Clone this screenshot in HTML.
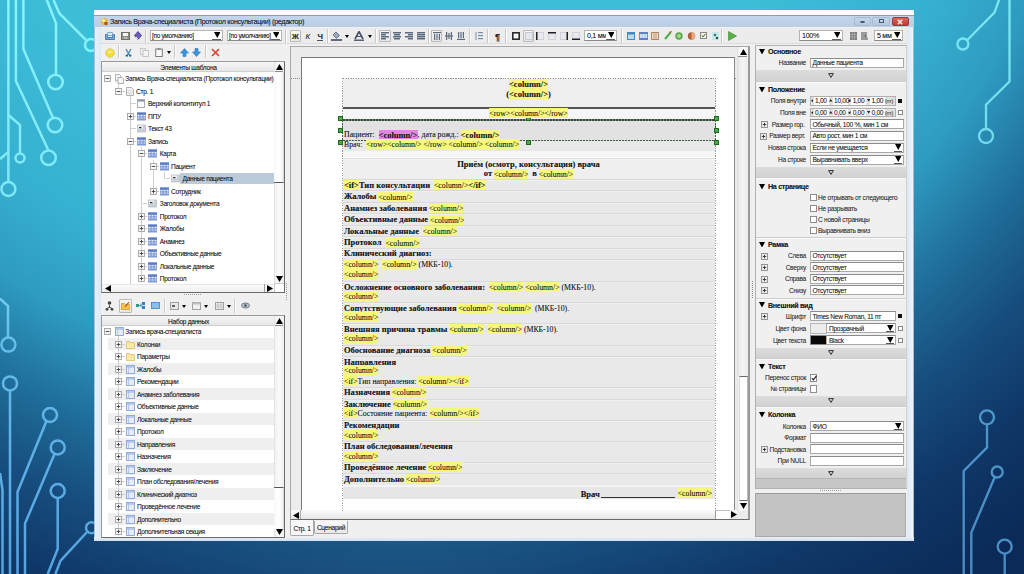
<!DOCTYPE html>
<html><head><meta charset="utf-8">
<style>
*{margin:0;padding:0;box-sizing:border-box}
html,body{width:1024px;height:574px;overflow:hidden}
body{position:relative;font-family:"Liberation Sans",sans-serif;background:radial-gradient(ellipse 200px 60px at 400px 574px,rgba(45,100,140,0.25),rgba(45,100,140,0) 100%),radial-gradient(circle 1050px at 400px -300px,#3dbdd8 44.3%,#36b0d0 58.4%,#2e9bc0 66.4%,#1f6d9a 74.8%,#174f80 81.6%,#0f3868 89.5%,#0b2a58 99%)}
.a{position:absolute}
.t{position:absolute;white-space:nowrap;line-height:1;text-shadow:0 0 0.5px rgba(0,0,0,0.35)}
.hl{background:#f7f77e;padding:0.6px 0}
b{font-size:8.5px}
.pk{background:#e385e4;padding:0.6px 0}
</style></head><body>
<svg class="a" style="left:0;top:0" width="1024" height="574" viewBox="0 0 1024 574">
 <defs>
  <linearGradient id="lc" x1="0" y1="0" x2="0" y2="574" gradientUnits="userSpaceOnUse">
   <stop offset="0" stop-color="#86f4fb"/><stop offset="0.4" stop-color="#7ee6f6"/><stop offset="0.6" stop-color="#67bdea"/><stop offset="1" stop-color="#55a2e0"/>
  </linearGradient>
  <linearGradient id="rc" x1="0" y1="0" x2="0" y2="574" gradientUnits="userSpaceOnUse">
   <stop offset="0" stop-color="#7ce8f4"/><stop offset="0.3" stop-color="#6fd6ec"/><stop offset="0.7" stop-color="#5098cc"/><stop offset="1" stop-color="#4a8cc4"/>
  </linearGradient>
 </defs>
 <g fill="none" stroke="url(#lc)" stroke-width="2.5">
  <path d="M8.4 0V182"/>
  <path d="M15.9 0V81L48.5 150.5"/>
  <path d="M23.4 0V49L53 118"/>
  <path d="M46.8 0L56 23.4V74.5"/>
  <circle cx="55.5" cy="82" r="7.3"/>
  <path d="M53.5 0L59.4 13.4L86 40"/>
  <circle cx="91" cy="45" r="6"/>
  <path d="M8.4 115L20 125V153.5"/>
  <circle cx="20" cy="158" r="4.5"/>
  <path d="M8.4 152L0 159"/>
  <circle cx="48.5" cy="157.8" r="7.3"/>
  <circle cx="55" cy="125" r="7.3"/>
  <circle cx="8.4" cy="189" r="7"/>
  <path d="M0 298.6L8 306V337.6"/>
  <circle cx="8.4" cy="344.6" r="7"/>
  <circle cx="10" cy="383.4" r="7"/>
  <path d="M10 390.4V574"/>
  <circle cx="50" cy="415" r="7"/>
  <path d="M46.5 421L17.5 492V574"/>
  <circle cx="57.7" cy="447.5" r="7"/>
  <path d="M54.5 454L25 523.6V574"/>
  <circle cx="57.7" cy="491" r="7"/>
  <path d="M57.7 498V549L47.7 574"/>
  <path d="M0 473L2.5 490V574"/>
  <circle cx="91.5" cy="527.7" r="5.5"/>
  <path d="M87.5 531.5L60.6 560.6L55.4 574"/>
  </g><g fill="none" stroke="url(#rc)" stroke-width="2.3">
  <path d="M999 0L994.4 12.6L966.8 40.5"/>
  <circle cx="962.9" cy="44" r="5.5"/>
  <path d="M1009.5 0V81.5L986 104.7V129"/>
  <circle cx="986" cy="136" r="7"/>
  <circle cx="987" cy="417.3" r="7"/>
  <path d="M987 424.3V447.5L963.7 471V574"/>
  <circle cx="997.2" cy="472" r="5.5"/>
  <path d="M994.8 477L971.3 532.6V574"/>
  <circle cx="1004.7" cy="546.6" r="7"/>
  <path d="M1004.7 553.6V574"/>
 </g>
</svg>
<div class="a" style="left:94px;top:10px;width:820px;height:531px;background:#e4eef8"></div><div class="a" style="left:94px;top:10px;width:820px;height:5px;background:#fafbfc"></div><div class="a" style="left:94px;top:15px;width:820px;height:1px;background:#8d9cab"></div><div class="a" style="left:94px;top:16px;width:820px;height:11px;background:linear-gradient(#c4d5ea,#b9cde6)"></div><div class="a" style="left:94px;top:27px;width:1px;height:513px;background:#a9bccf"></div><div class="a" style="left:913px;top:27px;width:1px;height:513px;background:#a9bccf"></div><div class="a" style="left:95px;top:27px;width:6px;height:511px;background:linear-gradient(90deg,#e9f1fa,#dce8f4)"></div><div class="a" style="left:907px;top:27px;width:6px;height:511px;background:linear-gradient(90deg,#dce8f4,#eef4fb)"></div><div class="a" style="left:94px;top:537px;width:820px;height:4px;background:linear-gradient(#f0f0f0,#dfe9f4 40%,#cfe0f0)"></div><div class="a" style="left:101px;top:27px;width:806px;height:510px;background:#f0f0f0"></div><svg class="a" style="left:100px;top:17px" width="9" height="9" viewBox="0 0 9 9"><circle cx="4.5" cy="4.5" r="3.6" fill="#e8b64a"/><circle cx="3.5" cy="3.5" r="1.6" fill="#fff3b0"/><circle cx="6" cy="6.5" r="1.8" fill="#b0502a"/></svg><div class="t" style="left:110px;top:18.82px;font-size:7.15px;color:#15202e;font-weight:400;font-family:'Liberation Sans',sans-serif;letter-spacing:-0.305px;">Запись Врача-специалиста (Протокол консультации) (редактор)</div><div class="a" style="left:854px;top:16.5px;width:17px;height:9.5px;background:linear-gradient(#c4d5ea,#b4c8e2);border:1px solid #a8bad0;border-radius:2px"></div><div class="a" style="left:859.5px;top:20.5px;width:5px;height:2.5px;border:1px solid #4a5870;border-radius:1px"></div><div class="a" style="left:872px;top:16.5px;width:17.5px;height:9.5px;background:linear-gradient(#c4d5ea,#b4c8e2);border:1px solid #a8bad0;border-radius:2px"></div><div class="a" style="left:878.5px;top:18.8px;width:5px;height:4px;border:1.3px solid #4a5870"></div><div class="a" style="left:891.5px;top:16.5px;width:17px;height:9.5px;background:linear-gradient(#d86a60,#c03a30);border:1px solid #9a3a34;border-radius:2px"></div><svg class="a" style="left:897px;top:18.5px" width="6" height="6" viewBox="0 0 6 6"><path d="M0.8 0.8L5.2 5.2M5.2 0.8L0.8 5.2" stroke="#f4e8e4" stroke-width="1.6"/></svg><div class="a" style="left:101px;top:28px;width:806px;height:16px;background:#ececec"></div><div class="a" style="left:101px;top:43px;width:806px;height:1px;background:#dcdcdc"></div><svg class="a" style="left:105px;top:31px" width="10" height="9" viewBox="0 0 10 9"><path d="M0.5 3.5h2v3h5v-3h2v5h-9z" fill="#7aa7d6" stroke="#4d7fb6" stroke-width="1"/><path d="M2.5 1.5h5v3h-5z" fill="#d7ebf8" stroke="#6a9ccc" stroke-width="0.8"/></svg><svg class="a" style="left:121px;top:32px" width="9" height="8" viewBox="0 0 9 8"><rect x="0.5" y="0.5" width="8" height="7" fill="#8a8a82" stroke="#6e6e66"/><rect x="2" y="1" width="5" height="3" fill="#f4f4f4"/><rect x="2.5" y="5" width="4" height="2" fill="#b9b9b0"/></svg><svg class="a" style="left:134px;top:31px" width="8" height="9" viewBox="0 0 8 9"><path d="M4 0.5L7.5 4.5L4 8.5L0.5 4.5z" fill="#6a5cb8" stroke="#3e3390" stroke-width="0.8"/><path d="M2 6l2 2.5" stroke="#fff" stroke-width="1"/></svg><div class="a" style="left:145px;top:29px;width:1px;height:14px;background:#c9c9c9"></div><div class="a" style="left:146px;top:29px;width:1px;height:14px;background:#fbfbfb"></div><div class="a" style="left:150px;top:30px;width:73px;height:11px;background:#fff;border:1px solid #b5b5b5;border-bottom-color:#8a8a8a"></div><div class="t" style="left:152px;top:33.11px;font-size:6.38px;color:#202020;font-weight:400;font-family:'Liberation Sans',sans-serif;letter-spacing:-0.273px;">[по умолчанию]</div><div class="a" style="left:212px;top:31px;width:10px;height:9px;background:#fff"></div><svg class="a" style="left:213.75px;top:32.20px" width="6.5" height="6" viewBox="0 0 6.5 6"><polygon points="0,0 6.5,0 3.25,6" fill="#000"/></svg><div class="a" style="left:212px;top:39px;width:9px;height:1px;background:#606060"></div><div class="a" style="left:227px;top:30px;width:55px;height:11px;background:#fff;border:1px solid #b5b5b5;border-bottom-color:#8a8a8a"></div><div class="t" style="left:229px;top:33.11px;font-size:6.38px;color:#202020;font-weight:400;font-family:'Liberation Sans',sans-serif;letter-spacing:-0.273px;">[по умолчанию]</div><div class="a" style="left:271px;top:31px;width:10px;height:9px;background:#fff"></div><svg class="a" style="left:272.75px;top:32.20px" width="6.5" height="6" viewBox="0 0 6.5 6"><polygon points="0,0 6.5,0 3.25,6" fill="#000"/></svg><div class="a" style="left:271px;top:39px;width:9px;height:1px;background:#606060"></div><div class="a" style="left:285px;top:29px;width:1px;height:14px;background:#c9c9c9"></div><div class="a" style="left:286px;top:29px;width:1px;height:14px;background:#fbfbfb"></div><div class="a" style="left:290px;top:30px;width:11px;height:12px;background:linear-gradient(#f7f7f7,#e6e6e6);border:1px solid #b9b9b9;border-radius:1px"></div><div class="t" style="left:95.5px;width:400px;text-align:center;top:33.19px;font-size:7.5px;color:#303030;font-weight:700;font-family:'Liberation Sans',sans-serif;">Ж</div><div class="t" style="left:107.69999999999999px;width:400px;text-align:center;top:33.11px;font-size:7.7px;color:#303030;font-weight:400;font-family:'Liberation Sans',sans-serif;letter-spacing:-0.329px;font-style:italic">К</div><div class="t" style="left:120px;width:400px;text-align:center;top:32.71px;font-size:7.7px;color:#303030;font-weight:700;font-family:'Liberation Sans',sans-serif;letter-spacing:-0.329px;">Ч</div><div class="a" style="left:317px;top:40px;width:6px;height:1px;background:#505050"></div><div class="a" style="left:327px;top:29px;width:1px;height:14px;background:#c9c9c9"></div><div class="a" style="left:328px;top:29px;width:1px;height:14px;background:#fbfbfb"></div><svg class="a" style="left:331px;top:31px" width="11" height="10" viewBox="0 0 11 10"><path d="M2 4L5 1L8.5 4.5L5.5 7.5z" fill="#9aa8c0" stroke="#56627a" stroke-width="0.8"/><rect x="0" y="8" width="11" height="2" fill="#606a7a"/></svg><svg class="a" style="left:344.50px;top:34.50px" width="4" height="3" viewBox="0 0 4 3"><polygon points="0,0 4,0 2.0,3" fill="#000"/></svg><svg class="a" style="left:354px;top:31px" width="10" height="10" viewBox="0 0 10 10"><path d="M1 8L5 0.5L9 8" fill="none" stroke="#4a5068" stroke-width="1.6"/><path d="M3 5.5h4" stroke="#4a5068" stroke-width="1"/><rect x="0" y="8.5" width="10" height="1.5" fill="#5a6278"/></svg><svg class="a" style="left:367.50px;top:34.50px" width="4" height="3" viewBox="0 0 4 3"><polygon points="0,0 4,0 2.0,3" fill="#000"/></svg><div class="a" style="left:375px;top:29px;width:1px;height:14px;background:#c9c9c9"></div><div class="a" style="left:376px;top:29px;width:1px;height:14px;background:#fbfbfb"></div><div class="a" style="left:379px;top:30px;width:12px;height:12px;background:linear-gradient(#f7f7f7,#e6e6e6);border:1px solid #b9b9b9;border-radius:1px"></div><svg class="a" style="left:381px;top:32px" width="8" height="8" viewBox="0 0 8 8"><rect x="0" y="0" width="8" height="1.5" fill="#5c6a80"/><rect x="0" y="2" width="5" height="1.5" fill="#5c6a80"/><rect x="0" y="4" width="8" height="1.5" fill="#5c6a80"/><rect x="0" y="6" width="5" height="1.5" fill="#5c6a80"/></svg><svg class="a" style="left:393px;top:32px" width="8" height="8" viewBox="0 0 8 8"><rect x="0" y="0" width="8" height="1.5" fill="#5c6a80"/><rect x="1" y="2" width="6" height="1.5" fill="#5c6a80"/><rect x="0" y="4" width="8" height="1.5" fill="#5c6a80"/><rect x="1" y="6" width="6" height="1.5" fill="#5c6a80"/></svg><svg class="a" style="left:405px;top:32px" width="8" height="8" viewBox="0 0 8 8"><rect x="0" y="0" width="8" height="1.5" fill="#5c6a80"/><rect x="3" y="2" width="5" height="1.5" fill="#5c6a80"/><rect x="0" y="4" width="8" height="1.5" fill="#5c6a80"/><rect x="3" y="6" width="5" height="1.5" fill="#5c6a80"/></svg><svg class="a" style="left:417px;top:32px" width="8" height="8" viewBox="0 0 8 8"><rect x="0" y="0" width="8" height="1.5" fill="#5c6a80"/><rect x="0" y="2" width="8" height="1.5" fill="#5c6a80"/><rect x="0" y="4" width="8" height="1.5" fill="#5c6a80"/><rect x="0" y="6" width="8" height="1.5" fill="#5c6a80"/></svg><div class="a" style="left:428px;top:29px;width:1px;height:14px;background:#c9c9c9"></div><div class="a" style="left:429px;top:29px;width:1px;height:14px;background:#fbfbfb"></div><div class="a" style="left:431px;top:30px;width:11px;height:12px;background:linear-gradient(#f7f7f7,#e6e6e6);border:1px solid #b9b9b9;border-radius:1px"></div><svg class="a" style="left:433px;top:32px" width="8" height="8" viewBox="0 0 8 8"><rect x="0" y="0" width="8" height="1.2" fill="#5c6a80"/><rect x="1" y="2" width="1.2" height="6" fill="#5c6a80"/><rect x="3.4" y="2" width="1.2" height="6" fill="#5c6a80"/><rect x="5.8" y="2" width="1.2" height="6" fill="#5c6a80"/></svg><svg class="a" style="left:445px;top:32px" width="8" height="8" viewBox="0 0 8 8"><rect x="0" y="3.4" width="8" height="1.2" fill="#5c6a80"/><rect x="1" y="0" width="1.2" height="8" fill="#5c6a80"/><rect x="3.4" y="1" width="1.2" height="6" fill="#5c6a80"/><rect x="5.8" y="0" width="1.2" height="8" fill="#5c6a80"/></svg><svg class="a" style="left:457px;top:32px" width="8" height="8" viewBox="0 0 8 8"><rect x="0" y="6.8" width="8" height="1.2" fill="#5c6a80"/><rect x="1" y="0" width="1.2" height="6" fill="#5c6a80"/><rect x="3.4" y="0" width="1.2" height="6" fill="#5c6a80"/><rect x="5.8" y="0" width="1.2" height="6" fill="#5c6a80"/></svg><div class="a" style="left:469px;top:29px;width:1px;height:14px;background:#c9c9c9"></div><div class="a" style="left:470px;top:29px;width:1px;height:14px;background:#fbfbfb"></div><svg class="a" style="left:475px;top:32px" width="8" height="8" viewBox="0 0 8 8"><rect x="3" y="0" width="5" height="1.2" fill="#7890a8"/><rect x="3" y="3" width="5" height="1.2" fill="#7890a8"/><rect x="3" y="6" width="5" height="1.2" fill="#7890a8"/><path d="M1 0v8" stroke="#7890a8" stroke-width="1"/></svg><div class="a" style="left:487px;top:29px;width:1px;height:14px;background:#c9c9c9"></div><div class="a" style="left:488px;top:29px;width:1px;height:14px;background:#fbfbfb"></div><div class="t" style="left:297.5px;width:400px;text-align:center;top:32.92px;font-size:9px;color:#202020;font-weight:700;font-family:'Liberation Sans',sans-serif;">¶</div><div class="a" style="left:505px;top:29px;width:1px;height:14px;background:#c9c9c9"></div><div class="a" style="left:506px;top:29px;width:1px;height:14px;background:#fbfbfb"></div><svg class="a" style="left:512px;top:32px" width="8" height="8" viewBox="0 0 8 8"><rect x="0.8" y="0.8" width="6.4" height="6.4" fill="#f4f4f8" stroke="#202020" stroke-width="1.5"/></svg><div class="a" style="left:523px;top:30px;width:11px;height:12px;background:linear-gradient(#f7f7f7,#e6e6e6);border:1px solid #b9b9b9;border-radius:1px"></div><svg class="a" style="left:525px;top:32px" width="8" height="8" viewBox="0 0 8 8"><rect x="0.5" y="0.5" width="7" height="7" fill="#e4e6f0" stroke="#c8c8d0" stroke-width="1"/></svg><svg class="a" style="left:536px;top:32px" width="8" height="8" viewBox="0 0 8 8"><rect x="0.5" y="0.5" width="7" height="7" fill="#e8e8ee" stroke="#d0d0d8"/><rect x="0" y="0" width="1.5" height="8" fill="#202020"/></svg><svg class="a" style="left:548px;top:32px" width="8" height="8" viewBox="0 0 8 8"><rect x="0.5" y="0.5" width="7" height="7" fill="#e8e8ee" stroke="#d0d0d8"/><rect x="0" y="0" width="8" height="1.5" fill="#202020"/></svg><svg class="a" style="left:560px;top:32px" width="8" height="8" viewBox="0 0 8 8"><rect x="0.5" y="0.5" width="7" height="7" fill="#e8e8ee" stroke="#d0d0d8"/><rect x="6.5" y="0" width="1.5" height="8" fill="#202020"/></svg><svg class="a" style="left:572px;top:32px" width="8" height="8" viewBox="0 0 8 8"><rect x="0.5" y="0.5" width="7" height="7" fill="#e8e8ee" stroke="#d0d0d8"/><rect x="0" y="6.5" width="8" height="1.5" fill="#202020"/></svg><div class="a" style="left:584px;top:30px;width:33px;height:11px;background:#fff;border:1px solid #b5b5b5;border-bottom-color:#8a8a8a"></div><div class="t" style="left:587px;top:32.82px;font-size:7.15px;color:#202020;font-weight:400;font-family:'Liberation Sans',sans-serif;letter-spacing:-0.305px;">0,1 мм</div><div class="a" style="left:606px;top:31px;width:10px;height:9px;background:#fff"></div><svg class="a" style="left:607.75px;top:32.20px" width="6.5" height="6" viewBox="0 0 6.5 6"><polygon points="0,0 6.5,0 3.25,6" fill="#000"/></svg><div class="a" style="left:606px;top:39px;width:9px;height:1px;background:#606060"></div><div class="a" style="left:621px;top:29px;width:1px;height:14px;background:#c9c9c9"></div><div class="a" style="left:622px;top:29px;width:1px;height:14px;background:#fbfbfb"></div><svg class="a" style="left:627px;top:32px" width="8" height="8" viewBox="0 0 8 8"><rect x="0.5" y="0.5" width="7" height="7" fill="#bcd8f4" stroke="#4a86c8"/><rect x="0.5" y="0.5" width="7" height="2" fill="#4a86c8"/></svg><svg class="a" style="left:639px;top:32px" width="9" height="8" viewBox="0 0 9 8"><rect x="0" y="0" width="9" height="8" fill="#5a82c8"/><rect x="0.8" y="2" width="7.4" height="4" fill="#d8e4f6"/><path d="M3 2v4M6 2v4" stroke="#8aa6d8" stroke-width="0.6"/></svg><svg class="a" style="left:651px;top:32px" width="8" height="8" viewBox="0 0 8 8"><rect x="0.5" y="0.5" width="7" height="7" fill="#f2dcc8" stroke="#b08a68"/><path d="M3 0.5v7M5 0.5v7" stroke="#b08a68" stroke-width="0.8"/></svg><svg class="a" style="left:664px;top:31px" width="8" height="9" viewBox="0 0 8 9"><path d="M1 8L6.5 1.5" stroke="#4caf40" stroke-width="2"/><path d="M6 1.5l1.5-1" stroke="#d04030" stroke-width="1.5"/></svg><svg class="a" style="left:675px;top:32px" width="8" height="8" viewBox="0 0 8 8"><circle cx="4" cy="4" r="3.7" fill="#5aa84a"/><circle cx="4" cy="4" r="2" fill="#a8d890"/></svg><svg class="a" style="left:687px;top:32px" width="9" height="8" viewBox="0 0 9 8"><circle cx="4.5" cy="4" r="3.7" fill="#b0603a"/><path d="M4.5 0.3a3.7 3.7 0 0 1 0 7.4z" fill="#e8a880"/></svg><svg class="a" style="left:700px;top:32px" width="7" height="7" viewBox="0 0 7 7"><rect x="0.5" y="0.5" width="6" height="6" fill="#f0f0e8" stroke="#8a8a80"/><path d="M1.8 3.5l1.2 1.4l2.3-2.8" fill="none" stroke="#2a6a20" stroke-width="1"/></svg><svg class="a" style="left:712px;top:32px" width="7" height="8" viewBox="0 0 7 8"><rect x="0" y="0" width="7" height="8" fill="#c8e8e8"/><circle cx="3" cy="3" r="1.3" fill="#3a7a7a"/><circle cx="5" cy="6" r="1.2" fill="#1a5050"/></svg><div class="a" style="left:721px;top:29px;width:1px;height:14px;background:#c9c9c9"></div><div class="a" style="left:722px;top:29px;width:1px;height:14px;background:#fbfbfb"></div><svg class="a" style="left:728px;top:31px" width="9" height="10" viewBox="0 0 9 10"><path d="M0.5 0.5L8.5 5L0.5 9.5z" fill="#58b048" stroke="#3a8a30" stroke-width="0.6"/></svg><div class="a" style="left:799px;top:30px;width:44px;height:11px;background:#fff;border:1px solid #b5b5b5;border-bottom-color:#8a8a8a"></div><div class="t" style="left:802px;top:32.82px;font-size:7.15px;color:#202020;font-weight:400;font-family:'Liberation Sans',sans-serif;letter-spacing:-0.305px;">100%</div><div class="a" style="left:832px;top:31px;width:10px;height:9px;background:#fff"></div><svg class="a" style="left:833.75px;top:32.20px" width="6.5" height="6" viewBox="0 0 6.5 6"><polygon points="0,0 6.5,0 3.25,6" fill="#000"/></svg><div class="a" style="left:832px;top:39px;width:9px;height:1px;background:#606060"></div><svg class="a" style="left:850px;top:32px" width="7" height="8" viewBox="0 0 7 8"><rect x="0" y="0" width="7" height="8" fill="#7a7a7a"/><path d="M0 2.5h7M0 5h7M2.3 0v8M4.6 0v8" stroke="#c8c8c8" stroke-width="0.5"/></svg><svg class="a" style="left:861px;top:32px" width="8" height="9" viewBox="0 0 8 9"><rect x="0" y="0" width="6" height="8" fill="#9a9a9a"/><path d="M4 3l3 4l-1.5 0.5z" fill="#fff" stroke="#505050" stroke-width="0.6"/></svg><div class="a" style="left:874px;top:30px;width:29px;height:11px;background:#fff;border:1px solid #b5b5b5;border-bottom-color:#8a8a8a"></div><div class="t" style="left:877px;top:32.82px;font-size:7.15px;color:#202020;font-weight:400;font-family:'Liberation Sans',sans-serif;letter-spacing:-0.305px;">5 мм</div><div class="a" style="left:892px;top:31px;width:10px;height:9px;background:#fff"></div><svg class="a" style="left:893.75px;top:32.20px" width="6.5" height="6" viewBox="0 0 6.5 6"><polygon points="0,0 6.5,0 3.25,6" fill="#000"/></svg><div class="a" style="left:892px;top:39px;width:9px;height:1px;background:#606060"></div><svg class="a" style="left:105px;top:48px" width="10" height="10" viewBox="0 0 10 10"><circle cx="5" cy="5" r="4.3" fill="#f2dc3c" stroke="#e0c030" stroke-width="0.6"/><ellipse cx="5" cy="4" rx="2.6" ry="1.6" fill="#f8ec80"/></svg><div class="a" style="left:118px;top:45px;width:1px;height:13px;background:#c9c9c9"></div><div class="a" style="left:119px;top:45px;width:1px;height:13px;background:#fbfbfb"></div><svg class="a" style="left:125px;top:48px" width="7" height="9" viewBox="0 0 7 9"><path d="M1 1L5 8M6 1L2 8" stroke="#4a8ab8" stroke-width="1.4"/><circle cx="1.8" cy="7.6" r="1.2" fill="#2a6a98"/><circle cx="5.2" cy="7.6" r="1.2" fill="#2a6a98"/></svg><svg class="a" style="left:140px;top:48px" width="9" height="9" viewBox="0 0 9 9"><rect x="0.5" y="0.5" width="5" height="6" fill="#f0f0f0" stroke="#c0c0c0" stroke-width="0.8"/><rect x="3" y="2.5" width="5.5" height="6" fill="#f4f4f4" stroke="#b8b8b8" stroke-width="0.8"/></svg><svg class="a" style="left:155px;top:48px" width="8" height="9" viewBox="0 0 8 9"><rect x="0.7" y="1" width="6.6" height="7.5" fill="#f8f8f8" stroke="#707070" stroke-width="0.9"/><rect x="2.5" y="0" width="3" height="2" fill="#909090"/></svg><svg class="a" style="left:166.50px;top:50.80px" width="4" height="3" viewBox="0 0 4 3"><polygon points="0,0 4,0 2.0,3" fill="#000"/></svg><div class="a" style="left:174px;top:45px;width:1px;height:13px;background:#c9c9c9"></div><div class="a" style="left:175px;top:45px;width:1px;height:13px;background:#fbfbfb"></div><svg class="a" style="left:180px;top:48px" width="9" height="9" viewBox="0 0 9 9"><path d="M4.5 0.5L8.5 5H6v3.5H3V5H0.5z" fill="#3a94dc" stroke="#2a78c0" stroke-width="0.6"/></svg><svg class="a" style="left:192px;top:48px" width="9" height="9" viewBox="0 0 9 9"><path d="M4.5 8.5L8.5 4H6V0.5H3V4H0.5z" fill="#3a94dc" stroke="#2a78c0" stroke-width="0.6"/></svg><div class="a" style="left:205px;top:45px;width:1px;height:13px;background:#c9c9c9"></div><div class="a" style="left:206px;top:45px;width:1px;height:13px;background:#fbfbfb"></div><svg class="a" style="left:211px;top:48px" width="9" height="9" viewBox="0 0 9 9"><path d="M1 1L8 8M8 1L1 8" stroke="#d83a2a" stroke-width="1.5"/></svg><div class="a" style="left:101px;top:61px;width:184px;height:232px;background:#fff;border:1px solid #9a9a9a;border-right:1.5px solid #6a6a6a;border-bottom:1.5px solid #6a6a6a"></div><div class="a" style="left:102px;top:62px;width:172px;height:10px;background:linear-gradient(#f6f6f6,#e6e6e6);border-bottom:1px solid #cfcfcf"></div><div class="t" style="left:-11.5px;width:400px;text-align:center;top:64.73px;font-size:6.6px;color:#202020;font-weight:400;font-family:'Liberation Sans',sans-serif;letter-spacing:-0.282px;">Элементы шаблона</div><div class="a" style="left:274px;top:62px;width:10px;height:222px;background:linear-gradient(90deg,#f0f0f0,#fafafa 40%,#f0f0f0);border-left:1px solid #e4e4e4"></div><div class="a" style="left:274px;top:72px;width:10px;height:111px;background:linear-gradient(90deg,#f8f8f8,#fff 50%,#f2f2f2);border-bottom:1px solid #5a5a5a;border-right:1px solid #d8d8d8"></div><svg class="a" style="left:275.50px;top:64.30px" width="7" height="6" viewBox="0 0 7 6"><polygon points="0,6 7,6 3.5,0" fill="#000"/></svg><div class="a" style="left:275px;top:71px;width:8px;height:1px;background:#8a8a8a"></div><svg class="a" style="left:275.50px;top:275.60px" width="7" height="6" viewBox="0 0 7 6"><polygon points="0,0 7,0 3.5,6" fill="#000"/></svg><div class="a" style="left:102px;top:284px;width:172px;height:8px;background:linear-gradient(#fafafa,#eeeeee);border-top:1px solid #e8e8e8"></div><svg class="a" style="left:104.50px;top:284.50px" width="6" height="7" viewBox="0 0 6 7"><polygon points="6,0 6,7 0,3.5" fill="#000"/></svg><svg class="a" style="left:266.50px;top:284.50px" width="6" height="7" viewBox="0 0 6 7"><polygon points="0,0 0,7 6,3.5" fill="#000"/></svg><div class="a" style="left:264px;top:284px;width:1px;height:8px;background:#9a9a9a"></div><div class="a" style="left:274px;top:283px;width:10px;height:9px;background:#fff;border-left:1px solid #d0d0d0;border-top:1px solid #d0d0d0"></div><div class="a" style="left:180px;top:173px;width:94px;height:11px;background:#bccbd9"></div><div class="a" style="left:118px;top:84px;width:1px;height:5px;background:#cfcfcf"></div><div class="a" style="left:130px;top:96px;width:1px;height:188px;background:#cfcfcf"></div><div class="a" style="left:141px;top:147px;width:1px;height:132px;background:#cfcfcf"></div><div class="a" style="left:153px;top:160px;width:1px;height:31px;background:#cfcfcf"></div><div class="a" style="left:164px;top:172px;width:1px;height:7px;background:#cfcfcf"></div><svg class="a" style="left:103.5px;top:75.2px" width="7" height="7" viewBox="0 0 7 7"><rect x="0.5" y="0.5" width="6" height="6" fill="#f6f6f6" stroke="#a4a4a4" stroke-width="0.9"/><path d="M1.7 3.5h3.6" stroke="#383838" stroke-width="0.85"/></svg><svg class="a" style="left:115px;top:74.2px" width="9" height="10" viewBox="0 0 9 10"><path d="M0.5 0.5h4l1.5 1.5v5h-5.5z" fill="#f6f6f6" stroke="#a8a8a8" stroke-width="0.9"/><path d="M3 3.5h4l1.5 1.5v4.5h-5.5z" fill="#f6f6f6" stroke="#a8a8a8" stroke-width="0.9"/></svg><div class="t" style="left:125.3px;top:76.23px;font-size:6.6px;color:#1e1e1e;font-weight:400;font-family:'Liberation Sans',sans-serif;letter-spacing:-0.282px;">Запись Врача-специалиста (Протокол консультации)</div><div class="a" style="left:119.7px;top:91px;width:5.299999999999997px;height:1px;background:#cfcfcf"></div><svg class="a" style="left:115.2px;top:87.7px" width="7" height="7" viewBox="0 0 7 7"><rect x="0.5" y="0.5" width="6" height="6" fill="#f6f6f6" stroke="#a4a4a4" stroke-width="0.9"/><path d="M1.7 3.5h3.6" stroke="#383838" stroke-width="0.85"/></svg><svg class="a" style="left:126px;top:86.7px" width="8" height="9" viewBox="0 0 8 9"><path d="M0.5 0.5h5l2 2v6h-7z" fill="#f4f4f4" stroke="#a8a8a8" stroke-width="0.9"/><path d="M1.5 3.5h5M1.5 5.5h5M1.5 7h5" stroke="#d0d0d0" stroke-width="0.7"/></svg><div class="t" style="left:136px;top:88.73px;font-size:6.6px;color:#1e1e1e;font-weight:400;font-family:'Liberation Sans',sans-serif;letter-spacing:-0.282px;">Стр. 1</div><div class="a" style="left:131px;top:103px;width:5px;height:1px;background:#cfcfcf"></div><svg class="a" style="left:137px;top:99.2px" width="8" height="9" viewBox="0 0 8 9"><rect x="0.5" y="0.5" width="7" height="8" fill="#fbfbfb" stroke="#a4a4a4" stroke-width="0.9"/><rect x="1" y="1" width="6" height="1.6" fill="#8898b8"/></svg><div class="t" style="left:148px;top:101.23px;font-size:6.6px;color:#1e1e1e;font-weight:400;font-family:'Liberation Sans',sans-serif;letter-spacing:-0.282px;">Верхний колонтитул 1</div><div class="a" style="left:131px;top:116px;width:5px;height:1px;background:#cfcfcf"></div><svg class="a" style="left:126.5px;top:112.7px" width="7" height="7" viewBox="0 0 7 7"><rect x="0.5" y="0.5" width="6" height="6" fill="#f6f6f6" stroke="#a4a4a4" stroke-width="0.9"/><path d="M1.7 3.5h3.6" stroke="#383838" stroke-width="0.85"/><path d="M3.5 1.7v3.6" stroke="#383838" stroke-width="0.85"/></svg><svg class="a" style="left:137px;top:111.7px" width="9" height="9" viewBox="0 0 9 9"><rect x="0" y="0.5" width="9" height="8" fill="#7e9ad6"/><rect x="0" y="0.5" width="9" height="2" fill="#5d7cc4"/><path d="M0.6 3.6h1.8M3.6 3.6h1.8M6.6 3.6h1.8M0.6 6h1.8M3.6 6h1.8M6.6 6h1.8" stroke="#eef2fa" stroke-width="1.1"/></svg><div class="t" style="left:148px;top:113.73px;font-size:6.6px;color:#1e1e1e;font-weight:400;font-family:'Liberation Sans',sans-serif;letter-spacing:-0.282px;">ППУ</div><div class="a" style="left:131px;top:128px;width:5px;height:1px;background:#cfcfcf"></div><svg class="a" style="left:137px;top:124.19999999999999px" width="9" height="9" viewBox="0 0 9 9"><rect x="0.5" y="1" width="8" height="7" fill="#c8d0d8" stroke="#b8c0c8" stroke-width="0.8"/><rect x="1" y="1.5" width="5" height="3" fill="#eef0f2"/><rect x="2" y="3" width="2.5" height="1.2" fill="#303030"/></svg><div class="t" style="left:148px;top:126.22px;font-size:6.6px;color:#1e1e1e;font-weight:400;font-family:'Liberation Sans',sans-serif;letter-spacing:-0.282px;">Текст 43</div><div class="a" style="left:131px;top:141px;width:5px;height:1px;background:#cfcfcf"></div><svg class="a" style="left:126.5px;top:137.7px" width="7" height="7" viewBox="0 0 7 7"><rect x="0.5" y="0.5" width="6" height="6" fill="#f6f6f6" stroke="#a4a4a4" stroke-width="0.9"/><path d="M1.7 3.5h3.6" stroke="#383838" stroke-width="0.85"/></svg><svg class="a" style="left:137px;top:136.7px" width="9" height="9" viewBox="0 0 9 9"><rect x="0" y="0.5" width="9" height="8" fill="#7e9ad6"/><rect x="0" y="0.5" width="9" height="2" fill="#5d7cc4"/><path d="M0.6 3.6h1.8M3.6 3.6h1.8M6.6 3.6h1.8M0.6 6h1.8M3.6 6h1.8M6.6 6h1.8" stroke="#eef2fa" stroke-width="1.1"/></svg><div class="t" style="left:148px;top:138.72px;font-size:6.6px;color:#1e1e1e;font-weight:400;font-family:'Liberation Sans',sans-serif;letter-spacing:-0.282px;">Запись</div><div class="a" style="left:142.5px;top:153px;width:4.5px;height:1px;background:#cfcfcf"></div><svg class="a" style="left:138.0px;top:150.2px" width="7" height="7" viewBox="0 0 7 7"><rect x="0.5" y="0.5" width="6" height="6" fill="#f6f6f6" stroke="#a4a4a4" stroke-width="0.9"/><path d="M1.7 3.5h3.6" stroke="#383838" stroke-width="0.85"/></svg><svg class="a" style="left:148px;top:149.2px" width="9" height="9" viewBox="0 0 9 9"><rect x="0" y="0.5" width="9" height="8" fill="#7e9ad6"/><rect x="0" y="0.5" width="9" height="2" fill="#5d7cc4"/><path d="M0.6 3.6h1.8M3.6 3.6h1.8M6.6 3.6h1.8M0.6 6h1.8M3.6 6h1.8M6.6 6h1.8" stroke="#eef2fa" stroke-width="1.1"/></svg><div class="t" style="left:159.7px;top:151.22px;font-size:6.6px;color:#1e1e1e;font-weight:400;font-family:'Liberation Sans',sans-serif;letter-spacing:-0.282px;">Карта</div><div class="a" style="left:154px;top:166px;width:4.5px;height:1px;background:#cfcfcf"></div><svg class="a" style="left:149.5px;top:162.7px" width="7" height="7" viewBox="0 0 7 7"><rect x="0.5" y="0.5" width="6" height="6" fill="#f6f6f6" stroke="#a4a4a4" stroke-width="0.9"/><path d="M1.7 3.5h3.6" stroke="#383838" stroke-width="0.85"/></svg><svg class="a" style="left:159.5px;top:161.7px" width="9" height="9" viewBox="0 0 9 9"><rect x="0" y="0.5" width="9" height="8" fill="#7e9ad6"/><rect x="0" y="0.5" width="9" height="2" fill="#5d7cc4"/><path d="M0.6 3.6h1.8M3.6 3.6h1.8M6.6 3.6h1.8M0.6 6h1.8M3.6 6h1.8M6.6 6h1.8" stroke="#eef2fa" stroke-width="1.1"/></svg><div class="t" style="left:171px;top:163.72px;font-size:6.6px;color:#1e1e1e;font-weight:400;font-family:'Liberation Sans',sans-serif;letter-spacing:-0.282px;">Пациент</div><div class="a" style="left:165.5px;top:178px;width:4.5px;height:1px;background:#cfcfcf"></div><svg class="a" style="left:171px;top:174.2px" width="9" height="9" viewBox="0 0 9 9"><rect x="0.5" y="1" width="8" height="7" fill="#c8d0d8" stroke="#b8c0c8" stroke-width="0.8"/><rect x="1" y="1.5" width="5" height="3" fill="#eef0f2"/><rect x="2" y="3" width="2.5" height="1.2" fill="#303030"/></svg><div class="t" style="left:182.5px;top:176.22px;font-size:6.6px;color:#1e1e1e;font-weight:400;font-family:'Liberation Sans',sans-serif;letter-spacing:-0.282px;">Данные пациента</div><div class="a" style="left:154px;top:191px;width:4.5px;height:1px;background:#cfcfcf"></div><svg class="a" style="left:149.5px;top:187.7px" width="7" height="7" viewBox="0 0 7 7"><rect x="0.5" y="0.5" width="6" height="6" fill="#f6f6f6" stroke="#a4a4a4" stroke-width="0.9"/><path d="M1.7 3.5h3.6" stroke="#383838" stroke-width="0.85"/><path d="M3.5 1.7v3.6" stroke="#383838" stroke-width="0.85"/></svg><svg class="a" style="left:159.5px;top:186.7px" width="9" height="9" viewBox="0 0 9 9"><rect x="0" y="0.5" width="9" height="8" fill="#7e9ad6"/><rect x="0" y="0.5" width="9" height="2" fill="#5d7cc4"/><path d="M0.6 3.6h1.8M3.6 3.6h1.8M6.6 3.6h1.8M0.6 6h1.8M3.6 6h1.8M6.6 6h1.8" stroke="#eef2fa" stroke-width="1.1"/></svg><div class="t" style="left:171px;top:188.72px;font-size:6.6px;color:#1e1e1e;font-weight:400;font-family:'Liberation Sans',sans-serif;letter-spacing:-0.282px;">Сотрудник</div><div class="a" style="left:142.5px;top:203px;width:4.5px;height:1px;background:#cfcfcf"></div><svg class="a" style="left:148px;top:199.2px" width="9" height="9" viewBox="0 0 9 9"><rect x="0.5" y="1" width="8" height="7" fill="#c8d0d8" stroke="#b8c0c8" stroke-width="0.8"/><rect x="1" y="1.5" width="5" height="3" fill="#eef0f2"/><rect x="2" y="3" width="2.5" height="1.2" fill="#303030"/></svg><div class="t" style="left:159.7px;top:201.22px;font-size:6.6px;color:#1e1e1e;font-weight:400;font-family:'Liberation Sans',sans-serif;letter-spacing:-0.282px;">Заголовок документа</div><div class="a" style="left:142.5px;top:216px;width:4.5px;height:1px;background:#cfcfcf"></div><svg class="a" style="left:138.0px;top:212.7px" width="7" height="7" viewBox="0 0 7 7"><rect x="0.5" y="0.5" width="6" height="6" fill="#f6f6f6" stroke="#a4a4a4" stroke-width="0.9"/><path d="M1.7 3.5h3.6" stroke="#383838" stroke-width="0.85"/><path d="M3.5 1.7v3.6" stroke="#383838" stroke-width="0.85"/></svg><svg class="a" style="left:148px;top:211.7px" width="9" height="9" viewBox="0 0 9 9"><rect x="0" y="0.5" width="9" height="8" fill="#7e9ad6"/><rect x="0" y="0.5" width="9" height="2" fill="#5d7cc4"/><path d="M0.6 3.6h1.8M3.6 3.6h1.8M6.6 3.6h1.8M0.6 6h1.8M3.6 6h1.8M6.6 6h1.8" stroke="#eef2fa" stroke-width="1.1"/></svg><div class="t" style="left:159.7px;top:213.72px;font-size:6.6px;color:#1e1e1e;font-weight:400;font-family:'Liberation Sans',sans-serif;letter-spacing:-0.282px;">Протокол</div><div class="a" style="left:142.5px;top:228px;width:4.5px;height:1px;background:#cfcfcf"></div><svg class="a" style="left:138.0px;top:225.2px" width="7" height="7" viewBox="0 0 7 7"><rect x="0.5" y="0.5" width="6" height="6" fill="#f6f6f6" stroke="#a4a4a4" stroke-width="0.9"/><path d="M1.7 3.5h3.6" stroke="#383838" stroke-width="0.85"/><path d="M3.5 1.7v3.6" stroke="#383838" stroke-width="0.85"/></svg><svg class="a" style="left:148px;top:224.2px" width="9" height="9" viewBox="0 0 9 9"><rect x="0" y="0.5" width="9" height="8" fill="#7e9ad6"/><rect x="0" y="0.5" width="9" height="2" fill="#5d7cc4"/><path d="M0.6 3.6h1.8M3.6 3.6h1.8M6.6 3.6h1.8M0.6 6h1.8M3.6 6h1.8M6.6 6h1.8" stroke="#eef2fa" stroke-width="1.1"/></svg><div class="t" style="left:159.7px;top:226.22px;font-size:6.6px;color:#1e1e1e;font-weight:400;font-family:'Liberation Sans',sans-serif;letter-spacing:-0.282px;">Жалобы</div><div class="a" style="left:142.5px;top:241px;width:4.5px;height:1px;background:#cfcfcf"></div><svg class="a" style="left:138.0px;top:237.7px" width="7" height="7" viewBox="0 0 7 7"><rect x="0.5" y="0.5" width="6" height="6" fill="#f6f6f6" stroke="#a4a4a4" stroke-width="0.9"/><path d="M1.7 3.5h3.6" stroke="#383838" stroke-width="0.85"/><path d="M3.5 1.7v3.6" stroke="#383838" stroke-width="0.85"/></svg><svg class="a" style="left:148px;top:236.7px" width="9" height="9" viewBox="0 0 9 9"><rect x="0" y="0.5" width="9" height="8" fill="#7e9ad6"/><rect x="0" y="0.5" width="9" height="2" fill="#5d7cc4"/><path d="M0.6 3.6h1.8M3.6 3.6h1.8M6.6 3.6h1.8M0.6 6h1.8M3.6 6h1.8M6.6 6h1.8" stroke="#eef2fa" stroke-width="1.1"/></svg><div class="t" style="left:159.7px;top:238.72px;font-size:6.6px;color:#1e1e1e;font-weight:400;font-family:'Liberation Sans',sans-serif;letter-spacing:-0.282px;">Анамнез</div><div class="a" style="left:142.5px;top:253px;width:4.5px;height:1px;background:#cfcfcf"></div><svg class="a" style="left:138.0px;top:250.2px" width="7" height="7" viewBox="0 0 7 7"><rect x="0.5" y="0.5" width="6" height="6" fill="#f6f6f6" stroke="#a4a4a4" stroke-width="0.9"/><path d="M1.7 3.5h3.6" stroke="#383838" stroke-width="0.85"/><path d="M3.5 1.7v3.6" stroke="#383838" stroke-width="0.85"/></svg><svg class="a" style="left:148px;top:249.2px" width="9" height="9" viewBox="0 0 9 9"><rect x="0" y="0.5" width="9" height="8" fill="#7e9ad6"/><rect x="0" y="0.5" width="9" height="2" fill="#5d7cc4"/><path d="M0.6 3.6h1.8M3.6 3.6h1.8M6.6 3.6h1.8M0.6 6h1.8M3.6 6h1.8M6.6 6h1.8" stroke="#eef2fa" stroke-width="1.1"/></svg><div class="t" style="left:159.7px;top:251.22px;font-size:6.6px;color:#1e1e1e;font-weight:400;font-family:'Liberation Sans',sans-serif;letter-spacing:-0.282px;">Объективные данные</div><div class="a" style="left:142.5px;top:266px;width:4.5px;height:1px;background:#cfcfcf"></div><svg class="a" style="left:138.0px;top:262.7px" width="7" height="7" viewBox="0 0 7 7"><rect x="0.5" y="0.5" width="6" height="6" fill="#f6f6f6" stroke="#a4a4a4" stroke-width="0.9"/><path d="M1.7 3.5h3.6" stroke="#383838" stroke-width="0.85"/><path d="M3.5 1.7v3.6" stroke="#383838" stroke-width="0.85"/></svg><svg class="a" style="left:148px;top:261.7px" width="9" height="9" viewBox="0 0 9 9"><rect x="0" y="0.5" width="9" height="8" fill="#7e9ad6"/><rect x="0" y="0.5" width="9" height="2" fill="#5d7cc4"/><path d="M0.6 3.6h1.8M3.6 3.6h1.8M6.6 3.6h1.8M0.6 6h1.8M3.6 6h1.8M6.6 6h1.8" stroke="#eef2fa" stroke-width="1.1"/></svg><div class="t" style="left:159.7px;top:263.72px;font-size:6.6px;color:#1e1e1e;font-weight:400;font-family:'Liberation Sans',sans-serif;letter-spacing:-0.282px;">Локальные данные</div><div class="a" style="left:142.5px;top:278px;width:4.5px;height:1px;background:#cfcfcf"></div><svg class="a" style="left:138.0px;top:275.2px" width="7" height="7" viewBox="0 0 7 7"><rect x="0.5" y="0.5" width="6" height="6" fill="#f6f6f6" stroke="#a4a4a4" stroke-width="0.9"/><path d="M1.7 3.5h3.6" stroke="#383838" stroke-width="0.85"/><path d="M3.5 1.7v3.6" stroke="#383838" stroke-width="0.85"/></svg><svg class="a" style="left:148px;top:274.2px" width="9" height="9" viewBox="0 0 9 9"><rect x="0" y="0.5" width="9" height="8" fill="#7e9ad6"/><rect x="0" y="0.5" width="9" height="2" fill="#5d7cc4"/><path d="M0.6 3.6h1.8M3.6 3.6h1.8M6.6 3.6h1.8M0.6 6h1.8M3.6 6h1.8M6.6 6h1.8" stroke="#eef2fa" stroke-width="1.1"/></svg><div class="t" style="left:159.7px;top:276.22px;font-size:6.6px;color:#1e1e1e;font-weight:400;font-family:'Liberation Sans',sans-serif;letter-spacing:-0.282px;">Протокол</div><div class="a" style="left:184px;top:294px;width:17px;height:1px;background:repeating-linear-gradient(90deg,#9a9a9a 0 1px,transparent 1px 2px)"></div><div class="a" style="left:286px;top:283px;width:1px;height:17px;background:repeating-linear-gradient(#9a9a9a 0 1px,transparent 1px 2px)"></div><svg class="a" style="left:105px;top:301px" width="9" height="10" viewBox="0 0 9 10"><circle cx="4.5" cy="2" r="1.8" fill="#404040"/><path d="M4.5 4v3M2 7.5l2.5-1.5l2.5 1.5" stroke="#404040" stroke-width="0.9" fill="none"/><circle cx="2" cy="8.3" r="1.4" fill="#404040"/><circle cx="7" cy="8.3" r="1.4" fill="#404040"/></svg><div class="a" style="left:119px;top:299px;width:13px;height:14px;background:linear-gradient(#f7f7f7,#e6e6e6);border:1px solid #b9b9b9;border-radius:1px"></div><svg class="a" style="left:121px;top:301px" width="9" height="9" viewBox="0 0 9 9"><path d="M0.5 2.5h3l1 1h4v5h-8z" fill="#f2c64a" stroke="#c89820" stroke-width="0.7"/><path d="M4 6L8 1" stroke="#c04020" stroke-width="1.2"/></svg><svg class="a" style="left:136px;top:302px" width="9" height="7" viewBox="0 0 9 7"><rect x="0" y="2" width="3" height="3" fill="#2a9a8a"/><rect x="6" y="0" width="3" height="3" fill="#3a7ac8"/><rect x="6" y="4" width="3" height="3" fill="#3a7ac8"/><path d="M3 3.5h3M5 1.5v4" stroke="#2a8a9a" stroke-width="0.8"/></svg><svg class="a" style="left:151px;top:302px" width="9" height="7" viewBox="0 0 9 7"><rect x="0.5" y="0.5" width="8" height="6" fill="#8ac0e8" stroke="#3a80c0" stroke-width="0.8"/></svg><div class="a" style="left:164px;top:299px;width:1px;height:14px;background:#c9c9c9"></div><div class="a" style="left:165px;top:299px;width:1px;height:14px;background:#fbfbfb"></div><svg class="a" style="left:170px;top:302px" width="9" height="8" viewBox="0 0 9 8"><rect x="0.5" y="0.5" width="8" height="7" fill="#e8e8e8" stroke="#a0a0a0"/><rect x="2" y="3" width="3" height="2" fill="#606060"/></svg><svg class="a" style="left:182.30px;top:304.50px" width="4" height="3" viewBox="0 0 4 3"><polygon points="0,0 4,0 2.0,3" fill="#000"/></svg><svg class="a" style="left:192px;top:302px" width="9" height="8" viewBox="0 0 9 8"><rect x="0.5" y="0.5" width="8" height="7" fill="#f0f0f0" stroke="#a0a0a0"/><rect x="0.5" y="0.5" width="8" height="2" fill="#c0c0c0"/></svg><svg class="a" style="left:204.40px;top:304.50px" width="4" height="3" viewBox="0 0 4 3"><polygon points="0,0 4,0 2.0,3" fill="#000"/></svg><svg class="a" style="left:215px;top:302px" width="9" height="8" viewBox="0 0 9 8"><rect x="0.5" y="0.5" width="8" height="7" fill="#f0f0f0" stroke="#a0a0a0"/><path d="M0.5 3h8M0.5 5h8M3 0.5v7M6 0.5v7" stroke="#b0b0b0" stroke-width="0.6"/></svg><svg class="a" style="left:226.80px;top:304.50px" width="4" height="3" viewBox="0 0 4 3"><polygon points="0,0 4,0 2.0,3" fill="#000"/></svg><div class="a" style="left:234px;top:299px;width:1px;height:14px;background:#c9c9c9"></div><div class="a" style="left:235px;top:299px;width:1px;height:14px;background:#fbfbfb"></div><svg class="a" style="left:241px;top:302px" width="9" height="7" viewBox="0 0 9 7"><ellipse cx="4.5" cy="3.5" rx="4" ry="2.5" fill="#b8c4d0" stroke="#5a6470" stroke-width="0.8"/><circle cx="4.5" cy="3.5" r="1.2" fill="#404850"/></svg><div class="a" style="left:101px;top:315px;width:184px;height:223px;background:#fff;border:1px solid #9a9a9a;border-right:1.5px solid #6a6a6a;border-bottom:1.5px solid #6a6a6a"></div><div class="a" style="left:102px;top:316px;width:172px;height:10px;background:linear-gradient(#f6f6f6,#e6e6e6);border-bottom:1px solid #cfcfcf"></div><div class="t" style="left:-11.5px;width:400px;text-align:center;top:318.82px;font-size:6.6px;color:#202020;font-weight:400;font-family:'Liberation Sans',sans-serif;letter-spacing:-0.282px;">Набор данных</div><div class="a" style="left:274px;top:316px;width:10px;height:221px;background:linear-gradient(90deg,#f0f0f0,#fafafa 40%,#f0f0f0);border-left:1px solid #e4e4e4"></div><div class="a" style="left:274px;top:487px;width:10px;height:43px;background:linear-gradient(90deg,#f8f8f8,#fff 50%,#f2f2f2);border-top:1px solid #5a5a5a;border-right:1px solid #d8d8d8"></div><svg class="a" style="left:275.50px;top:318.30px" width="7" height="6" viewBox="0 0 7 6"><polygon points="0,6 7,6 3.5,0" fill="#000"/></svg><div class="a" style="left:275px;top:325px;width:8px;height:1px;background:#8a8a8a"></div><svg class="a" style="left:275.50px;top:528.50px" width="7" height="6" viewBox="0 0 7 6"><polygon points="0,0 7,0 3.5,6" fill="#000"/></svg><div class="a" style="left:108px;top:338px;width:166px;height:12px;background:#efefef"></div><div class="a" style="left:108px;top:363px;width:166px;height:12px;background:#efefef"></div><div class="a" style="left:108px;top:388px;width:166px;height:12px;background:#efefef"></div><div class="a" style="left:108px;top:413px;width:166px;height:12px;background:#efefef"></div><div class="a" style="left:108px;top:438px;width:166px;height:12px;background:#efefef"></div><div class="a" style="left:108px;top:463px;width:166px;height:12px;background:#efefef"></div><div class="a" style="left:108px;top:488px;width:166px;height:12px;background:#efefef"></div><div class="a" style="left:108px;top:513px;width:166px;height:12px;background:#efefef"></div><svg class="a" style="left:103.5px;top:327.9px" width="7" height="7" viewBox="0 0 7 7"><rect x="0.5" y="0.5" width="6" height="6" fill="#f6f6f6" stroke="#a4a4a4" stroke-width="0.9"/><path d="M1.7 3.5h3.6" stroke="#383838" stroke-width="0.85"/></svg><svg class="a" style="left:115px;top:326.9px" width="9" height="9" viewBox="0 0 9 9"><rect x="0.5" y="0.5" width="8" height="8" fill="#e4ecf8" stroke="#8aa4d4" stroke-width="0.9"/><rect x="1" y="1" width="7" height="1.8" fill="#b4c8ec"/><path d="M2.6 1v7" stroke="#a8bce4" stroke-width="0.8"/></svg><div class="t" style="left:125.3px;top:328.92px;font-size:6.6px;color:#1e1e1e;font-weight:400;font-family:'Liberation Sans',sans-serif;letter-spacing:-0.282px;">Запись врача-специалиста</div><div class="a" style="left:118px;top:336px;width:1px;height:200px;background:#cfcfcf"></div><div class="a" style="left:121px;top:344px;width:4px;height:1px;background:#cfcfcf"></div><svg class="a" style="left:115.0px;top:340.5px" width="7" height="7" viewBox="0 0 7 7"><rect x="0.5" y="0.5" width="6" height="6" fill="#f6f6f6" stroke="#a4a4a4" stroke-width="0.9"/><path d="M1.7 3.5h3.6" stroke="#383838" stroke-width="0.85"/><path d="M3.5 1.7v3.6" stroke="#383838" stroke-width="0.85"/></svg><svg class="a" style="left:125.5px;top:339.5px" width="9" height="9" viewBox="0 0 9 9"><path d="M0.5 1.5h3l1 1h4v6h-8z" fill="#f8e08c" stroke="#dcc070" stroke-width="0.8"/><rect x="1" y="3.5" width="7" height="4.5" fill="#fbe9a8"/></svg><div class="t" style="left:137px;top:341.52px;font-size:6.6px;color:#1e1e1e;font-weight:400;font-family:'Liberation Sans',sans-serif;letter-spacing:-0.282px;">Колонки</div><div class="a" style="left:121px;top:356px;width:4px;height:1px;background:#cfcfcf"></div><svg class="a" style="left:115.0px;top:353.0px" width="7" height="7" viewBox="0 0 7 7"><rect x="0.5" y="0.5" width="6" height="6" fill="#f6f6f6" stroke="#a4a4a4" stroke-width="0.9"/><path d="M1.7 3.5h3.6" stroke="#383838" stroke-width="0.85"/><path d="M3.5 1.7v3.6" stroke="#383838" stroke-width="0.85"/></svg><svg class="a" style="left:125.5px;top:352.0px" width="9" height="9" viewBox="0 0 9 9"><path d="M0.5 1.5h3l1 1h4v6h-8z" fill="#f8e08c" stroke="#dcc070" stroke-width="0.8"/><rect x="1" y="3.5" width="7" height="4.5" fill="#fbe9a8"/></svg><div class="t" style="left:137px;top:354.02px;font-size:6.6px;color:#1e1e1e;font-weight:400;font-family:'Liberation Sans',sans-serif;letter-spacing:-0.282px;">Параметры</div><div class="a" style="left:121px;top:369px;width:4px;height:1px;background:#cfcfcf"></div><svg class="a" style="left:115.0px;top:365.5px" width="7" height="7" viewBox="0 0 7 7"><rect x="0.5" y="0.5" width="6" height="6" fill="#f6f6f6" stroke="#a4a4a4" stroke-width="0.9"/><path d="M1.7 3.5h3.6" stroke="#383838" stroke-width="0.85"/><path d="M3.5 1.7v3.6" stroke="#383838" stroke-width="0.85"/></svg><svg class="a" style="left:125.5px;top:364.5px" width="9" height="9" viewBox="0 0 9 9"><rect x="0.5" y="0.5" width="8" height="8" fill="#e4ecf8" stroke="#8aa4d4" stroke-width="0.9"/><rect x="1" y="1" width="7" height="1.8" fill="#b4c8ec"/><path d="M2.6 1v7" stroke="#a8bce4" stroke-width="0.8"/></svg><div class="t" style="left:137px;top:366.52px;font-size:6.6px;color:#1e1e1e;font-weight:400;font-family:'Liberation Sans',sans-serif;letter-spacing:-0.282px;">Жалобы</div><div class="a" style="left:121px;top:381px;width:4px;height:1px;background:#cfcfcf"></div><svg class="a" style="left:115.0px;top:378.0px" width="7" height="7" viewBox="0 0 7 7"><rect x="0.5" y="0.5" width="6" height="6" fill="#f6f6f6" stroke="#a4a4a4" stroke-width="0.9"/><path d="M1.7 3.5h3.6" stroke="#383838" stroke-width="0.85"/><path d="M3.5 1.7v3.6" stroke="#383838" stroke-width="0.85"/></svg><svg class="a" style="left:125.5px;top:377.0px" width="9" height="9" viewBox="0 0 9 9"><rect x="0.5" y="0.5" width="8" height="8" fill="#e4ecf8" stroke="#8aa4d4" stroke-width="0.9"/><rect x="1" y="1" width="7" height="1.8" fill="#b4c8ec"/><path d="M2.6 1v7" stroke="#a8bce4" stroke-width="0.8"/></svg><div class="t" style="left:137px;top:379.02px;font-size:6.6px;color:#1e1e1e;font-weight:400;font-family:'Liberation Sans',sans-serif;letter-spacing:-0.282px;">Рекомендации</div><div class="a" style="left:121px;top:394px;width:4px;height:1px;background:#cfcfcf"></div><svg class="a" style="left:115.0px;top:390.5px" width="7" height="7" viewBox="0 0 7 7"><rect x="0.5" y="0.5" width="6" height="6" fill="#f6f6f6" stroke="#a4a4a4" stroke-width="0.9"/><path d="M1.7 3.5h3.6" stroke="#383838" stroke-width="0.85"/><path d="M3.5 1.7v3.6" stroke="#383838" stroke-width="0.85"/></svg><svg class="a" style="left:125.5px;top:389.5px" width="9" height="9" viewBox="0 0 9 9"><rect x="0.5" y="0.5" width="8" height="8" fill="#e4ecf8" stroke="#8aa4d4" stroke-width="0.9"/><rect x="1" y="1" width="7" height="1.8" fill="#b4c8ec"/><path d="M2.6 1v7" stroke="#a8bce4" stroke-width="0.8"/></svg><div class="t" style="left:137px;top:391.52px;font-size:6.6px;color:#1e1e1e;font-weight:400;font-family:'Liberation Sans',sans-serif;letter-spacing:-0.282px;">Анамнез заболевания</div><div class="a" style="left:121px;top:406px;width:4px;height:1px;background:#cfcfcf"></div><svg class="a" style="left:115.0px;top:403.0px" width="7" height="7" viewBox="0 0 7 7"><rect x="0.5" y="0.5" width="6" height="6" fill="#f6f6f6" stroke="#a4a4a4" stroke-width="0.9"/><path d="M1.7 3.5h3.6" stroke="#383838" stroke-width="0.85"/><path d="M3.5 1.7v3.6" stroke="#383838" stroke-width="0.85"/></svg><svg class="a" style="left:125.5px;top:402.0px" width="9" height="9" viewBox="0 0 9 9"><rect x="0.5" y="0.5" width="8" height="8" fill="#e4ecf8" stroke="#8aa4d4" stroke-width="0.9"/><rect x="1" y="1" width="7" height="1.8" fill="#b4c8ec"/><path d="M2.6 1v7" stroke="#a8bce4" stroke-width="0.8"/></svg><div class="t" style="left:137px;top:404.02px;font-size:6.6px;color:#1e1e1e;font-weight:400;font-family:'Liberation Sans',sans-serif;letter-spacing:-0.282px;">Объективные данные</div><div class="a" style="left:121px;top:419px;width:4px;height:1px;background:#cfcfcf"></div><svg class="a" style="left:115.0px;top:415.5px" width="7" height="7" viewBox="0 0 7 7"><rect x="0.5" y="0.5" width="6" height="6" fill="#f6f6f6" stroke="#a4a4a4" stroke-width="0.9"/><path d="M1.7 3.5h3.6" stroke="#383838" stroke-width="0.85"/><path d="M3.5 1.7v3.6" stroke="#383838" stroke-width="0.85"/></svg><svg class="a" style="left:125.5px;top:414.5px" width="9" height="9" viewBox="0 0 9 9"><rect x="0.5" y="0.5" width="8" height="8" fill="#e4ecf8" stroke="#8aa4d4" stroke-width="0.9"/><rect x="1" y="1" width="7" height="1.8" fill="#b4c8ec"/><path d="M2.6 1v7" stroke="#a8bce4" stroke-width="0.8"/></svg><div class="t" style="left:137px;top:416.52px;font-size:6.6px;color:#1e1e1e;font-weight:400;font-family:'Liberation Sans',sans-serif;letter-spacing:-0.282px;">Локальные данные</div><div class="a" style="left:121px;top:431px;width:4px;height:1px;background:#cfcfcf"></div><svg class="a" style="left:115.0px;top:428.0px" width="7" height="7" viewBox="0 0 7 7"><rect x="0.5" y="0.5" width="6" height="6" fill="#f6f6f6" stroke="#a4a4a4" stroke-width="0.9"/><path d="M1.7 3.5h3.6" stroke="#383838" stroke-width="0.85"/><path d="M3.5 1.7v3.6" stroke="#383838" stroke-width="0.85"/></svg><svg class="a" style="left:125.5px;top:427.0px" width="9" height="9" viewBox="0 0 9 9"><rect x="0.5" y="0.5" width="8" height="8" fill="#e4ecf8" stroke="#8aa4d4" stroke-width="0.9"/><rect x="1" y="1" width="7" height="1.8" fill="#b4c8ec"/><path d="M2.6 1v7" stroke="#a8bce4" stroke-width="0.8"/></svg><div class="t" style="left:137px;top:429.02px;font-size:6.6px;color:#1e1e1e;font-weight:400;font-family:'Liberation Sans',sans-serif;letter-spacing:-0.282px;">Протокол</div><div class="a" style="left:121px;top:444px;width:4px;height:1px;background:#cfcfcf"></div><svg class="a" style="left:115.0px;top:440.5px" width="7" height="7" viewBox="0 0 7 7"><rect x="0.5" y="0.5" width="6" height="6" fill="#f6f6f6" stroke="#a4a4a4" stroke-width="0.9"/><path d="M1.7 3.5h3.6" stroke="#383838" stroke-width="0.85"/><path d="M3.5 1.7v3.6" stroke="#383838" stroke-width="0.85"/></svg><svg class="a" style="left:125.5px;top:439.5px" width="9" height="9" viewBox="0 0 9 9"><rect x="0.5" y="0.5" width="8" height="8" fill="#e4ecf8" stroke="#8aa4d4" stroke-width="0.9"/><rect x="1" y="1" width="7" height="1.8" fill="#b4c8ec"/><path d="M2.6 1v7" stroke="#a8bce4" stroke-width="0.8"/></svg><div class="t" style="left:137px;top:441.52px;font-size:6.6px;color:#1e1e1e;font-weight:400;font-family:'Liberation Sans',sans-serif;letter-spacing:-0.282px;">Направления</div><div class="a" style="left:121px;top:456px;width:4px;height:1px;background:#cfcfcf"></div><svg class="a" style="left:115.0px;top:453.0px" width="7" height="7" viewBox="0 0 7 7"><rect x="0.5" y="0.5" width="6" height="6" fill="#f6f6f6" stroke="#a4a4a4" stroke-width="0.9"/><path d="M1.7 3.5h3.6" stroke="#383838" stroke-width="0.85"/><path d="M3.5 1.7v3.6" stroke="#383838" stroke-width="0.85"/></svg><svg class="a" style="left:125.5px;top:452.0px" width="9" height="9" viewBox="0 0 9 9"><rect x="0.5" y="0.5" width="8" height="8" fill="#e4ecf8" stroke="#8aa4d4" stroke-width="0.9"/><rect x="1" y="1" width="7" height="1.8" fill="#b4c8ec"/><path d="M2.6 1v7" stroke="#a8bce4" stroke-width="0.8"/></svg><div class="t" style="left:137px;top:454.02px;font-size:6.6px;color:#1e1e1e;font-weight:400;font-family:'Liberation Sans',sans-serif;letter-spacing:-0.282px;">Назначения</div><div class="a" style="left:121px;top:469px;width:4px;height:1px;background:#cfcfcf"></div><svg class="a" style="left:115.0px;top:465.5px" width="7" height="7" viewBox="0 0 7 7"><rect x="0.5" y="0.5" width="6" height="6" fill="#f6f6f6" stroke="#a4a4a4" stroke-width="0.9"/><path d="M1.7 3.5h3.6" stroke="#383838" stroke-width="0.85"/><path d="M3.5 1.7v3.6" stroke="#383838" stroke-width="0.85"/></svg><svg class="a" style="left:125.5px;top:464.5px" width="9" height="9" viewBox="0 0 9 9"><rect x="0.5" y="0.5" width="8" height="8" fill="#e4ecf8" stroke="#8aa4d4" stroke-width="0.9"/><rect x="1" y="1" width="7" height="1.8" fill="#b4c8ec"/><path d="M2.6 1v7" stroke="#a8bce4" stroke-width="0.8"/></svg><div class="t" style="left:137px;top:466.52px;font-size:6.6px;color:#1e1e1e;font-weight:400;font-family:'Liberation Sans',sans-serif;letter-spacing:-0.282px;">Заключение</div><div class="a" style="left:121px;top:481px;width:4px;height:1px;background:#cfcfcf"></div><svg class="a" style="left:115.0px;top:478.0px" width="7" height="7" viewBox="0 0 7 7"><rect x="0.5" y="0.5" width="6" height="6" fill="#f6f6f6" stroke="#a4a4a4" stroke-width="0.9"/><path d="M1.7 3.5h3.6" stroke="#383838" stroke-width="0.85"/><path d="M3.5 1.7v3.6" stroke="#383838" stroke-width="0.85"/></svg><svg class="a" style="left:125.5px;top:477.0px" width="9" height="9" viewBox="0 0 9 9"><rect x="0.5" y="0.5" width="8" height="8" fill="#e4ecf8" stroke="#8aa4d4" stroke-width="0.9"/><rect x="1" y="1" width="7" height="1.8" fill="#b4c8ec"/><path d="M2.6 1v7" stroke="#a8bce4" stroke-width="0.8"/></svg><div class="t" style="left:137px;top:479.02px;font-size:6.6px;color:#1e1e1e;font-weight:400;font-family:'Liberation Sans',sans-serif;letter-spacing:-0.282px;">План обследования/лечения</div><div class="a" style="left:121px;top:494px;width:4px;height:1px;background:#cfcfcf"></div><svg class="a" style="left:115.0px;top:490.5px" width="7" height="7" viewBox="0 0 7 7"><rect x="0.5" y="0.5" width="6" height="6" fill="#f6f6f6" stroke="#a4a4a4" stroke-width="0.9"/><path d="M1.7 3.5h3.6" stroke="#383838" stroke-width="0.85"/><path d="M3.5 1.7v3.6" stroke="#383838" stroke-width="0.85"/></svg><svg class="a" style="left:125.5px;top:489.5px" width="9" height="9" viewBox="0 0 9 9"><rect x="0.5" y="0.5" width="8" height="8" fill="#e4ecf8" stroke="#8aa4d4" stroke-width="0.9"/><rect x="1" y="1" width="7" height="1.8" fill="#b4c8ec"/><path d="M2.6 1v7" stroke="#a8bce4" stroke-width="0.8"/></svg><div class="t" style="left:137px;top:491.52px;font-size:6.6px;color:#1e1e1e;font-weight:400;font-family:'Liberation Sans',sans-serif;letter-spacing:-0.282px;">Клинический диагноз</div><div class="a" style="left:121px;top:506px;width:4px;height:1px;background:#cfcfcf"></div><svg class="a" style="left:115.0px;top:503.0px" width="7" height="7" viewBox="0 0 7 7"><rect x="0.5" y="0.5" width="6" height="6" fill="#f6f6f6" stroke="#a4a4a4" stroke-width="0.9"/><path d="M1.7 3.5h3.6" stroke="#383838" stroke-width="0.85"/><path d="M3.5 1.7v3.6" stroke="#383838" stroke-width="0.85"/></svg><svg class="a" style="left:125.5px;top:502.0px" width="9" height="9" viewBox="0 0 9 9"><rect x="0.5" y="0.5" width="8" height="8" fill="#e4ecf8" stroke="#8aa4d4" stroke-width="0.9"/><rect x="1" y="1" width="7" height="1.8" fill="#b4c8ec"/><path d="M2.6 1v7" stroke="#a8bce4" stroke-width="0.8"/></svg><div class="t" style="left:137px;top:504.02px;font-size:6.6px;color:#1e1e1e;font-weight:400;font-family:'Liberation Sans',sans-serif;letter-spacing:-0.282px;">Проведённое лечение</div><div class="a" style="left:121px;top:519px;width:4px;height:1px;background:#cfcfcf"></div><svg class="a" style="left:115.0px;top:515.5px" width="7" height="7" viewBox="0 0 7 7"><rect x="0.5" y="0.5" width="6" height="6" fill="#f6f6f6" stroke="#a4a4a4" stroke-width="0.9"/><path d="M1.7 3.5h3.6" stroke="#383838" stroke-width="0.85"/><path d="M3.5 1.7v3.6" stroke="#383838" stroke-width="0.85"/></svg><svg class="a" style="left:125.5px;top:514.5px" width="9" height="9" viewBox="0 0 9 9"><rect x="0.5" y="0.5" width="8" height="8" fill="#e4ecf8" stroke="#8aa4d4" stroke-width="0.9"/><rect x="1" y="1" width="7" height="1.8" fill="#b4c8ec"/><path d="M2.6 1v7" stroke="#a8bce4" stroke-width="0.8"/></svg><div class="t" style="left:137px;top:516.52px;font-size:6.6px;color:#1e1e1e;font-weight:400;font-family:'Liberation Sans',sans-serif;letter-spacing:-0.282px;">Дополнительно</div><div class="a" style="left:121px;top:531px;width:4px;height:1px;background:#cfcfcf"></div><svg class="a" style="left:115.0px;top:528.0px" width="7" height="7" viewBox="0 0 7 7"><rect x="0.5" y="0.5" width="6" height="6" fill="#f6f6f6" stroke="#a4a4a4" stroke-width="0.9"/><path d="M1.7 3.5h3.6" stroke="#383838" stroke-width="0.85"/><path d="M3.5 1.7v3.6" stroke="#383838" stroke-width="0.85"/></svg><svg class="a" style="left:125.5px;top:527.0px" width="9" height="9" viewBox="0 0 9 9"><rect x="0.5" y="0.5" width="8" height="8" fill="#e4ecf8" stroke="#8aa4d4" stroke-width="0.9"/><rect x="1" y="1" width="7" height="1.8" fill="#b4c8ec"/><path d="M2.6 1v7" stroke="#a8bce4" stroke-width="0.8"/></svg><div class="t" style="left:137px;top:529.02px;font-size:6.6px;color:#1e1e1e;font-weight:400;font-family:'Liberation Sans',sans-serif;letter-spacing:-0.282px;">Дополнительная секция</div><div class="a" style="left:290px;top:46px;width:460px;height:474px;background:#ececec;border:1px solid #a8a8a8;border-right:2px solid #9a9a9a;border-bottom:1.5px solid #6a6a6a"></div><div class="a" style="left:301px;top:57px;width:434px;height:453px;background:#fff;border-left:1.5px solid #7a7a7a;border-top:1.5px solid #7a7a7a;border-right:1.5px solid #8a8a8a"></div><div class="a" style="left:291px;top:78px;width:10px;height:1px;background:repeating-linear-gradient(90deg,#8a8a8a 0 1px,transparent 1px 2px)"></div><div class="a" style="left:735px;top:78px;width:4px;height:1px;background:repeating-linear-gradient(90deg,#8a8a8a 0 1px,transparent 1px 2px)"></div><div class="a" style="left:737px;top:47px;width:11px;height:464px;background:linear-gradient(90deg,#f2f2f2,#fdfdfd 50%,#f2f2f2);border-left:1px solid #e0e0e0"></div><svg class="a" style="left:740.00px;top:48.80px" width="7" height="6" viewBox="0 0 7 6"><polygon points="0,6 7,6 3.5,0" fill="#000"/></svg><div class="a" style="left:738px;top:56px;width:9px;height:1px;background:#8a8a8a"></div><div class="a" style="left:738px;top:57px;width:10px;height:319px;background:linear-gradient(90deg,#e8e8e8,#f4f4f4 40%,#ececec)"></div><div class="a" style="left:739px;top:376px;width:9px;height:125px;background:#fff;border-top:1.5px solid #6a6a6a;border-left:1px solid #d8d8d8;border-right:1px solid #b8b8b8;border-bottom:1px solid #6a6a6a"></div><svg class="a" style="left:740.00px;top:502.50px" width="7" height="6" viewBox="0 0 7 6"><polygon points="0,0 7,0 3.5,6" fill="#000"/></svg><div class="a" style="left:291px;top:510px;width:446px;height:9px;background:linear-gradient(#fbfbfb,#e6e6e6)"></div><svg class="a" style="left:293.00px;top:511.50px" width="6" height="7" viewBox="0 0 6 7"><polygon points="6,0 6,7 0,3.5" fill="#000"/></svg><div class="a" style="left:300px;top:510px;width:1px;height:9px;background:#aaa"></div><div class="a" style="left:715px;top:510px;width:15px;height:9px;background:#fff;border-left:1px solid #a0a0a0;border-top:1px solid #c0c0c0"></div><svg class="a" style="left:731.00px;top:511.30px" width="6" height="7" viewBox="0 0 6 7"><polygon points="0,0 0,7 6,3.5" fill="#000"/></svg><div class="a" style="left:342.5px;top:78px;width:372.0px;height:29px;background:#efefef"></div><div class="a" style="left:342.5px;top:107px;width:372.0px;height:1.5px;background:#555"></div><div class="a" style="left:342.5px;top:108.5px;width:372.0px;height:11px;background:#f5f5f5"></div><div class="a" style="left:342.5px;top:120px;width:372.0px;height:21px;background:#e2e2e2"></div><div class="a" style="left:342.5px;top:141px;width:372.0px;height:10px;background:#e8e8e8"></div><div class="a" style="left:342.5px;top:151px;width:372.0px;height:6px;background:#f6f6f6"></div><div class="a" style="left:342.5px;top:158px;width:372.0px;height:21px;background:linear-gradient(#dedede 0 1px,#f4f4f4 1px 2px,#efefef 2px)"></div><div class="a" style="left:342.5px;top:179px;width:372.0px;height:11px;background:linear-gradient(#d9d9d9 0 1px,#efefef 1px 2px,#e9e9e9 2px)"></div><div class="a" style="left:342.5px;top:190px;width:372.0px;height:12px;background:linear-gradient(#d9d9d9 0 1px,#efefef 1px 2px,#e9e9e9 2px)"></div><div class="a" style="left:342.5px;top:202px;width:372.0px;height:11px;background:linear-gradient(#d9d9d9 0 1px,#efefef 1px 2px,#e9e9e9 2px)"></div><div class="a" style="left:342.5px;top:213px;width:372.0px;height:12px;background:linear-gradient(#d9d9d9 0 1px,#efefef 1px 2px,#e9e9e9 2px)"></div><div class="a" style="left:342.5px;top:225px;width:372.0px;height:11px;background:linear-gradient(#d9d9d9 0 1px,#efefef 1px 2px,#e9e9e9 2px)"></div><div class="a" style="left:342.5px;top:236px;width:372.0px;height:12px;background:linear-gradient(#d9d9d9 0 1px,#efefef 1px 2px,#e9e9e9 2px)"></div><div class="a" style="left:342.5px;top:248px;width:372.0px;height:11px;background:linear-gradient(#d9d9d9 0 1px,#efefef 1px 2px,#e9e9e9 2px)"></div><div class="a" style="left:342.5px;top:259px;width:372.0px;height:22px;background:linear-gradient(#d9d9d9 0 1px,#efefef 1px 2px,#e9e9e9 2px)"></div><div class="a" style="left:342.5px;top:281px;width:372.0px;height:21px;background:linear-gradient(#d9d9d9 0 1px,#efefef 1px 2px,#e9e9e9 2px)"></div><div class="a" style="left:342.5px;top:302px;width:372.0px;height:21px;background:linear-gradient(#d9d9d9 0 1px,#efefef 1px 2px,#e9e9e9 2px)"></div><div class="a" style="left:342.5px;top:323px;width:372.0px;height:22px;background:linear-gradient(#d9d9d9 0 1px,#efefef 1px 2px,#e9e9e9 2px)"></div><div class="a" style="left:342.5px;top:345px;width:372.0px;height:11px;background:linear-gradient(#d9d9d9 0 1px,#efefef 1px 2px,#e9e9e9 2px)"></div><div class="a" style="left:342.5px;top:356px;width:372.0px;height:31px;background:linear-gradient(#d9d9d9 0 1px,#efefef 1px 2px,#e9e9e9 2px)"></div><div class="a" style="left:342.5px;top:387px;width:372.0px;height:12px;background:linear-gradient(#d9d9d9 0 1px,#efefef 1px 2px,#e9e9e9 2px)"></div><div class="a" style="left:342.5px;top:399px;width:372.0px;height:21px;background:linear-gradient(#d9d9d9 0 1px,#efefef 1px 2px,#e9e9e9 2px)"></div><div class="a" style="left:342.5px;top:420px;width:372.0px;height:21px;background:linear-gradient(#d9d9d9 0 1px,#efefef 1px 2px,#e9e9e9 2px)"></div><div class="a" style="left:342.5px;top:441px;width:372.0px;height:21px;background:linear-gradient(#d9d9d9 0 1px,#efefef 1px 2px,#e9e9e9 2px)"></div><div class="a" style="left:342.5px;top:462px;width:372.0px;height:11px;background:linear-gradient(#d9d9d9 0 1px,#efefef 1px 2px,#e9e9e9 2px)"></div><div class="a" style="left:342.5px;top:473px;width:372.0px;height:12px;background:linear-gradient(#d9d9d9 0 1px,#efefef 1px 2px,#e9e9e9 2px)"></div><div class="a" style="left:342.5px;top:485px;width:372.0px;height:2.5px;background:#f4f4f4"></div><div class="a" style="left:342.5px;top:487.4px;width:372.0px;height:11.5px;background:#e6e6e6"></div><div class="a" style="left:342.5px;top:77.5px;width:372.0px;height:1px;background:repeating-linear-gradient(90deg,#8a8a8a 0 1px,transparent 1px 2.5px)"></div><div class="a" style="left:342.0px;top:78px;width:1px;height:433px;background:repeating-linear-gradient(#9a9a9a 0 1px,transparent 1px 2.5px)"></div><div class="a" style="left:714.5px;top:78px;width:1px;height:433px;background:repeating-linear-gradient(#9a9a9a 0 1px,transparent 1px 2.5px)"></div><div class="a" style="left:342.5px;top:119px;width:372.0px;height:2px;background:repeating-linear-gradient(90deg,#3a4a3a 0 2px,#7a8a7a 2px 3px)"></div><div class="a" style="left:342.5px;top:140px;width:372.0px;height:1px;background:repeating-linear-gradient(90deg,#4a5a4a 0 2px,#c8dcc8 2px 3px)"></div><div class="a" style="left:342.0px;top:120px;width:1px;height:21px;background:repeating-linear-gradient(#3a6a3a 0 2px,transparent 2px 3px)"></div><div class="a" style="left:714.5px;top:120px;width:1px;height:21px;background:repeating-linear-gradient(#3a6a3a 0 2px,transparent 2px 3px)"></div><div class="a" style="left:337.5px;top:116.0px;width:5px;height:5px;background:#4caa4c;border:1px solid #1e6a1e"></div><div class="a" style="left:337.5px;top:127.5px;width:5px;height:5px;background:#4caa4c;border:1px solid #1e6a1e"></div><div class="a" style="left:337.5px;top:139.5px;width:5px;height:5px;background:#4caa4c;border:1px solid #1e6a1e"></div><div class="a" style="left:713.5px;top:116.0px;width:5px;height:5px;background:#4caa4c;border:1px solid #1e6a1e"></div><div class="a" style="left:713.5px;top:127.5px;width:5px;height:5px;background:#4caa4c;border:1px solid #1e6a1e"></div><div class="a" style="left:713.5px;top:140.0px;width:5px;height:5px;background:#4caa4c;border:1px solid #1e6a1e"></div><div class="a" style="left:526.0px;top:116.0px;width:5px;height:5px;background:#4caa4c;border:1px solid #1e6a1e"></div><div class="a" style="left:526.0px;top:140.0px;width:5px;height:5px;background:#4caa4c;border:1px solid #1e6a1e"></div><div class="t" style="left:328.5px;width:400px;text-align:center;top:79.67px;font-size:7.8px;color:#1a1a1a;font-weight:400;font-family:'Liberation Serif',serif;"><span class="hl"><b>&lt;column/&gt;</b></span></div><div class="t" style="left:328.5px;width:400px;text-align:center;top:89.97px;font-size:7.8px;color:#1a1a1a;font-weight:400;font-family:'Liberation Serif',serif;"><b>(<span class="hl">&lt;column/&gt;</span>)</b></div><div class="t" style="left:328.5px;width:400px;text-align:center;top:109.37px;font-size:7.8px;color:#1a1a1a;font-weight:400;font-family:'Liberation Serif',serif;"><span class="hl">&lt;row&gt;&lt;column/&gt;&lt;/row&gt;</span></div><div class="t" style="left:344px;top:130.17px;font-size:7.8px;color:#1a1a1a;font-weight:400;font-family:'Liberation Serif',serif;">Пациент:&nbsp; <span class="pk"><b>&lt;column/&gt;</b></span>, дата рожд.: <span class="hl"><b>&lt;column/&gt;</b></span></div><div class="t" style="left:344px;top:140.87px;font-size:7.8px;color:#1a1a1a;font-weight:400;font-family:'Liberation Serif',serif;">Врач:&nbsp; <span class="hl">&lt;row&gt;&lt;column/&gt; &lt;/row&gt; &lt;column/&gt; &lt;column/&gt;</span></div><div class="t" style="left:328.5px;width:400px;text-align:center;top:159.87px;font-size:7.8px;color:#1a1a1a;font-weight:400;font-family:'Liberation Serif',serif;"><b>Приём (осмотр, консультация) врача</b></div><div class="t" style="left:328.5px;width:400px;text-align:center;top:169.37px;font-size:7.8px;color:#1a1a1a;font-weight:400;font-family:'Liberation Serif',serif;"><b>от</b> <span class="hl">&lt;column/&gt;</span>&nbsp; <b>в</b> <span class="hl">&lt;column/&gt;</span></div><div class="t" style="left:344px;top:180.67px;font-size:7.8px;color:#1a1a1a;font-weight:400;font-family:'Liberation Serif',serif;"><span class="hl"><b>&lt;if&gt;</b></span><b>Тип консультации</b>&nbsp; <span class="hl">&lt;column/&gt;<b>&lt;/if&gt;</b></span></div><div class="t" style="left:344px;top:192.17px;font-size:7.8px;color:#1a1a1a;font-weight:400;font-family:'Liberation Serif',serif;"><b>Жалобы</b> <span class="hl">&lt;column/&gt;</span></div><div class="t" style="left:344px;top:203.67px;font-size:7.8px;color:#1a1a1a;font-weight:400;font-family:'Liberation Serif',serif;"><b>Анамнез заболевания</b> <span class="hl">&lt;column/&gt;</span></div><div class="t" style="left:344px;top:215.17px;font-size:7.8px;color:#1a1a1a;font-weight:400;font-family:'Liberation Serif',serif;"><b>Объективные данные</b> <span class="hl">&lt;column/&gt;</span></div><div class="t" style="left:344px;top:226.67px;font-size:7.8px;color:#1a1a1a;font-weight:400;font-family:'Liberation Serif',serif;"><b>Локальные данные</b>&nbsp; <span class="hl">&lt;column/&gt;</span></div><div class="t" style="left:344px;top:238.17px;font-size:7.8px;color:#1a1a1a;font-weight:400;font-family:'Liberation Serif',serif;"><b>Протокол</b>&nbsp; <span class="hl">&lt;column/&gt;</span></div><div class="t" style="left:344px;top:249.47px;font-size:7.8px;color:#1a1a1a;font-weight:400;font-family:'Liberation Serif',serif;"><b>Клинический диагноз:</b></div><div class="t" style="left:344px;top:260.87px;font-size:7.8px;color:#1a1a1a;font-weight:400;font-family:'Liberation Serif',serif;"><span class="hl">&lt;column/&gt;</span>&nbsp; <span class="hl">&lt;column/&gt;</span> (МКБ-10).</div><div class="t" style="left:344px;top:270.87px;font-size:7.8px;color:#1a1a1a;font-weight:400;font-family:'Liberation Serif',serif;"><span class="hl">&lt;column/&gt;</span></div><div class="t" style="left:344px;top:282.57px;font-size:7.8px;color:#1a1a1a;font-weight:400;font-family:'Liberation Serif',serif;"><b>Осложнение основного заболевания:</b>&nbsp; <span class="hl">&lt;column/&gt;</span> <span class="hl">&lt;column/&gt;</span> (МКБ-10).</div><div class="t" style="left:344px;top:292.37px;font-size:7.8px;color:#1a1a1a;font-weight:400;font-family:'Liberation Serif',serif;"><span class="hl">&lt;column/&gt;</span></div><div class="t" style="left:344px;top:303.67px;font-size:7.8px;color:#1a1a1a;font-weight:400;font-family:'Liberation Serif',serif;"><b>Сопутствующие заболевания</b> <span class="hl">&lt;column/&gt;</span>&nbsp; <span class="hl">&lt;column/&gt;</span>&nbsp; (МКБ-10).</div><div class="t" style="left:344px;top:313.67px;font-size:7.8px;color:#1a1a1a;font-weight:400;font-family:'Liberation Serif',serif;"><span class="hl">&lt;column/&gt;</span></div><div class="t" style="left:344px;top:324.67px;font-size:7.8px;color:#1a1a1a;font-weight:400;font-family:'Liberation Serif',serif;"><b>Внешняя причина травмы</b> <span class="hl">&lt;column/&gt;</span>&nbsp; <span class="hl">&lt;column/&gt;</span> (МКБ-10).</div><div class="t" style="left:344px;top:334.67px;font-size:7.8px;color:#1a1a1a;font-weight:400;font-family:'Liberation Serif',serif;"><span class="hl">&lt;column/&gt;</span></div><div class="t" style="left:344px;top:345.87px;font-size:7.8px;color:#1a1a1a;font-weight:400;font-family:'Liberation Serif',serif;"><b>Обоснование диагноза</b> <span class="hl">&lt;column/&gt;</span></div><div class="t" style="left:344px;top:357.67px;font-size:7.8px;color:#1a1a1a;font-weight:400;font-family:'Liberation Serif',serif;"><b>Направления</b></div><div class="t" style="left:344px;top:366.67px;font-size:7.8px;color:#1a1a1a;font-weight:400;font-family:'Liberation Serif',serif;"><span class="hl">&lt;column/&gt;</span></div><div class="t" style="left:344px;top:377.67px;font-size:7.8px;color:#1a1a1a;font-weight:400;font-family:'Liberation Serif',serif;"><span class="hl">&lt;if&gt;</span>Тип направления: <span class="hl">&lt;column/&gt;&lt;/if&gt;</span></div><div class="t" style="left:344px;top:387.77px;font-size:7.8px;color:#1a1a1a;font-weight:400;font-family:'Liberation Serif',serif;"><b>Назначения</b> <span class="hl">&lt;column/&gt;</span></div><div class="t" style="left:344px;top:399.87px;font-size:7.8px;color:#1a1a1a;font-weight:400;font-family:'Liberation Serif',serif;"><b>Заключение</b> <span class="hl">&lt;column/&gt;</span></div><div class="t" style="left:344px;top:409.87px;font-size:7.8px;color:#1a1a1a;font-weight:400;font-family:'Liberation Serif',serif;"><span class="hl">&lt;if&gt;</span>Состояние пациента: <span class="hl">&lt;column/&gt;&lt;/if&gt;</span></div><div class="t" style="left:344px;top:421.17px;font-size:7.8px;color:#1a1a1a;font-weight:400;font-family:'Liberation Serif',serif;"><b>Рекомендации</b></div><div class="t" style="left:344px;top:431.17px;font-size:7.8px;color:#1a1a1a;font-weight:400;font-family:'Liberation Serif',serif;"><span class="hl">&lt;column/&gt;</span></div><div class="t" style="left:344px;top:442.37px;font-size:7.8px;color:#1a1a1a;font-weight:400;font-family:'Liberation Serif',serif;"><b>План обследования/лечения</b></div><div class="t" style="left:344px;top:452.37px;font-size:7.8px;color:#1a1a1a;font-weight:400;font-family:'Liberation Serif',serif;"><span class="hl">&lt;column/&gt;</span></div><div class="t" style="left:344px;top:462.77px;font-size:7.8px;color:#1a1a1a;font-weight:400;font-family:'Liberation Serif',serif;"><b>Проведённое лечение</b> <span class="hl">&lt;column/&gt;</span></div><div class="t" style="left:344px;top:474.87px;font-size:7.8px;color:#1a1a1a;font-weight:400;font-family:'Liberation Serif',serif;"><b>Дополнительно</b> <span class="hl">&lt;column/&gt;</span></div><div class="t" style="left:580.7px;top:489.87px;font-size:7.8px;color:#1a1a1a;font-weight:400;font-family:'Liberation Serif',serif;"><b>Врач</b></div><div class="a" style="left:601px;top:497px;width:74px;height:1px;background:#333"></div><div class="t" style="left:677.7px;top:489.87px;font-size:7.8px;color:#1a1a1a;font-weight:400;font-family:'Liberation Serif',serif;"><span class="hl">&lt;column/&gt;</span></div><div class="a" style="left:314px;top:521px;width:34px;height:13px;background:linear-gradient(#fafafa,#e8e8e8);border:1px solid #a8a8a8;border-top:none;border-radius:0 0 2px 2px"></div><div class="t" style="left:131px;width:400px;text-align:center;top:525.02px;font-size:6.6px;color:#202020;font-weight:400;font-family:'Liberation Sans',sans-serif;letter-spacing:-0.282px;">Сценарий</div><div class="a" style="left:290px;top:520px;width:24px;height:16px;background:#f8f8f8;border:1px solid #a8a8a8;border-top:none;border-radius:0 0 2px 2px"></div><div class="t" style="left:102px;width:400px;text-align:center;top:526.12px;font-size:6.6px;color:#202020;font-weight:400;font-family:'Liberation Sans',sans-serif;letter-spacing:-0.282px;">Стр. 1</div><div class="a" style="left:752px;top:281px;width:1px;height:18px;background:repeating-linear-gradient(#8a8a8a 0 1px,transparent 1px 2px)"></div><div class="a" style="left:755px;top:45px;width:152px;height:444px;background:#f0f0f0;border:1px solid #b0b0b0;border-right-color:#d0d0d0"></div><svg class="a" style="left:759.00px;top:48.75px" width="6" height="5.5" viewBox="0 0 6 5.5"><polygon points="0,0 6,0 3.0,5.5" fill="#000"/></svg><div class="t" style="left:768px;top:48.82px;font-size:7.15px;color:#1a1a1a;font-weight:700;font-family:'Liberation Sans',sans-serif;letter-spacing:-0.305px;">Основное</div><div class="t" style="right:218px;top:60.32px;font-size:6.6px;color:#3a3a3a;font-weight:400;font-family:'Liberation Sans',sans-serif;letter-spacing:-0.282px;">Название</div><div class="a" style="left:809.5px;top:57.8px;width:94.0px;height:10px;background:#fff;border:1px solid #a8a8a8;border-top-color:#8c8c8c"></div><div class="t" style="left:812.5px;top:60.32px;font-size:6.6px;color:#2a2a2a;font-weight:400;font-family:'Liberation Sans',sans-serif;letter-spacing:-0.282px;">Данные пациента</div><div class="a" style="left:756px;top:70px;width:150px;height:10.5px;background:linear-gradient(#dcdcdc,#d2d2d2)"></div><svg class="a" style="left:828px;top:72.75px" width="6" height="5" viewBox="0 0 6 5"><polygon points="0.6,0.6 5.4,0.6 3,4.4" fill="none" stroke="#303030" stroke-width="1"/></svg><div class="a" style="left:756px;top:80.5px;width:150px;height:1px;background:#cdcdcd"></div><div class="a" style="left:756px;top:81.5px;width:150px;height:1px;background:#fbfbfb"></div><svg class="a" style="left:759.00px;top:86.55px" width="6" height="5.5" viewBox="0 0 6 5.5"><polygon points="0,0 6,0 3.0,5.5" fill="#000"/></svg><div class="t" style="left:768px;top:86.62px;font-size:7.15px;color:#1a1a1a;font-weight:700;font-family:'Liberation Sans',sans-serif;letter-spacing:-0.305px;">Положение</div><div class="t" style="right:218px;top:98.12px;font-size:6.6px;color:#3a3a3a;font-weight:400;font-family:'Liberation Sans',sans-serif;letter-spacing:-0.282px;">Поля внутри</div><div class="a" style="left:809.5px;top:96.1px;width:86.5px;height:9.5px;background:#e0e0e0;border:1px solid #b0b0b0"></div><div class="a" style="left:813.5px;top:97.1px;width:15px;height:7.5px;background:#fff"></div><svg class="a" style="left:810.75px;top:98.85px" width="2.5" height="3.5" viewBox="0 0 2.5 3.5"><polygon points="2.5,0 2.5,3.5 0,1.75" fill="#222"/></svg><div class="t" style="left:815px;top:98.12px;font-size:6.6px;color:#2a2a2a;font-weight:400;font-family:'Liberation Sans',sans-serif;letter-spacing:-0.282px;">1,00</div><div class="a" style="left:832.5px;top:97.1px;width:15px;height:7.5px;background:#fff"></div><svg class="a" style="left:829.25px;top:99.35px" width="3.5" height="2.5" viewBox="0 0 3.5 2.5"><polygon points="0,2.5 3.5,2.5 1.75,0" fill="#222"/></svg><div class="t" style="left:834px;top:98.12px;font-size:6.6px;color:#2a2a2a;font-weight:400;font-family:'Liberation Sans',sans-serif;letter-spacing:-0.282px;">10,00</div><div class="a" style="left:851.2px;top:97.1px;width:15px;height:7.5px;background:#fff"></div><svg class="a" style="left:848.45px;top:98.85px" width="2.5" height="3.5" viewBox="0 0 2.5 3.5"><polygon points="2.5,0 2.5,3.5 0,1.75" fill="#222"/></svg><div class="t" style="left:852.7px;top:98.12px;font-size:6.6px;color:#2a2a2a;font-weight:400;font-family:'Liberation Sans',sans-serif;letter-spacing:-0.282px;">1,00</div><div class="a" style="left:870.0px;top:97.1px;width:15px;height:7.5px;background:#fff"></div><svg class="a" style="left:866.75px;top:99.35px" width="3.5" height="2.5" viewBox="0 0 3.5 2.5"><polygon points="0,0 3.5,0 1.75,2.5" fill="#222"/></svg><div class="t" style="left:871.5px;top:98.12px;font-size:6.6px;color:#2a2a2a;font-weight:400;font-family:'Liberation Sans',sans-serif;letter-spacing:-0.282px;">1,00</div><div class="t" style="left:885px;top:99.04px;font-size:5.5px;color:#444;font-weight:400;font-family:'Liberation Sans',sans-serif;letter-spacing:-0.235px;">(пт)</div><div class="a" style="left:898px;top:98.6px;width:4px;height:4px;background:#111"></div><div class="t" style="right:218px;top:109.83px;font-size:6.6px;color:#3a3a3a;font-weight:400;font-family:'Liberation Sans',sans-serif;letter-spacing:-0.282px;">Поля вне</div><div class="a" style="left:809.5px;top:107.8px;width:86.5px;height:9.5px;background:#e0e0e0;border:1px solid #b0b0b0"></div><div class="a" style="left:813.5px;top:108.8px;width:15px;height:7.5px;background:#fff"></div><svg class="a" style="left:810.75px;top:110.55px" width="2.5" height="3.5" viewBox="0 0 2.5 3.5"><polygon points="2.5,0 2.5,3.5 0,1.75" fill="#222"/></svg><div class="t" style="left:815px;top:109.83px;font-size:6.6px;color:#2a2a2a;font-weight:400;font-family:'Liberation Sans',sans-serif;letter-spacing:-0.282px;">0,00</div><div class="a" style="left:832.5px;top:108.8px;width:15px;height:7.5px;background:#fff"></div><svg class="a" style="left:829.25px;top:111.05px" width="3.5" height="2.5" viewBox="0 0 3.5 2.5"><polygon points="0,2.5 3.5,2.5 1.75,0" fill="#222"/></svg><div class="t" style="left:834px;top:109.83px;font-size:6.6px;color:#2a2a2a;font-weight:400;font-family:'Liberation Sans',sans-serif;letter-spacing:-0.282px;">0,00</div><div class="a" style="left:851.2px;top:108.8px;width:15px;height:7.5px;background:#fff"></div><svg class="a" style="left:848.45px;top:110.55px" width="2.5" height="3.5" viewBox="0 0 2.5 3.5"><polygon points="2.5,0 2.5,3.5 0,1.75" fill="#222"/></svg><div class="t" style="left:852.7px;top:109.83px;font-size:6.6px;color:#2a2a2a;font-weight:400;font-family:'Liberation Sans',sans-serif;letter-spacing:-0.282px;">0,00</div><div class="a" style="left:870.0px;top:108.8px;width:15px;height:7.5px;background:#fff"></div><svg class="a" style="left:866.75px;top:111.05px" width="3.5" height="2.5" viewBox="0 0 3.5 2.5"><polygon points="0,0 3.5,0 1.75,2.5" fill="#222"/></svg><div class="t" style="left:871.5px;top:109.83px;font-size:6.6px;color:#2a2a2a;font-weight:400;font-family:'Liberation Sans',sans-serif;letter-spacing:-0.282px;">0,00</div><div class="t" style="left:885px;top:110.74px;font-size:5.5px;color:#444;font-weight:400;font-family:'Liberation Sans',sans-serif;letter-spacing:-0.235px;">(пт)</div><div class="a" style="left:898px;top:110.3px;width:4.5px;height:4.5px;background:#fff;border:1px solid #8a8a8a"></div><svg class="a" style="left:760.5px;top:121px" width="7" height="7" viewBox="0 0 7 7"><rect x="0.5" y="0.5" width="6" height="6" fill="#ececec" stroke="#8a8a8a" stroke-width="0.9"/><path d="M1.8 3.5h3.4M3.5 1.8v3.4" stroke="#303030" stroke-width="0.9"/></svg><div class="t" style="right:219.5px;top:121.73px;font-size:6.6px;color:#3a3a3a;font-weight:400;font-family:'Liberation Sans',sans-serif;letter-spacing:-0.282px;">Размер гор.</div><div class="a" style="left:809.5px;top:119.2px;width:94.0px;height:10px;background:#fff;border:1px solid #a8a8a8;border-top-color:#8c8c8c"></div><div class="t" style="left:812.5px;top:121.73px;font-size:6.6px;color:#2a2a2a;font-weight:400;font-family:'Liberation Sans',sans-serif;letter-spacing:-0.282px;">Обычный, 100 %, мин 1 см</div><svg class="a" style="left:759.5px;top:132.8px" width="7" height="7" viewBox="0 0 7 7"><rect x="0.5" y="0.5" width="6" height="6" fill="#ececec" stroke="#8a8a8a" stroke-width="0.9"/><path d="M1.8 3.5h3.4M3.5 1.8v3.4" stroke="#303030" stroke-width="0.9"/></svg><div class="t" style="right:219px;top:133.33px;font-size:6.6px;color:#3a3a3a;font-weight:400;font-family:'Liberation Sans',sans-serif;letter-spacing:-0.282px;">Размер верт.</div><div class="a" style="left:809.5px;top:130.8px;width:94.0px;height:10px;background:#fff;border:1px solid #a8a8a8;border-top-color:#8c8c8c"></div><div class="t" style="left:812.5px;top:133.33px;font-size:6.6px;color:#2a2a2a;font-weight:400;font-family:'Liberation Sans',sans-serif;letter-spacing:-0.282px;">Авто рост, мин 1 см</div><div class="t" style="right:218px;top:145.12px;font-size:6.6px;color:#3a3a3a;font-weight:400;font-family:'Liberation Sans',sans-serif;letter-spacing:-0.282px;">Новая строка</div><div class="a" style="left:809.5px;top:142.6px;width:94.0px;height:10px;background:#fff;border:1px solid #a8a8a8;border-top-color:#8c8c8c"></div><div class="t" style="left:812.5px;top:145.12px;font-size:6.6px;color:#2a2a2a;font-weight:400;font-family:'Liberation Sans',sans-serif;letter-spacing:-0.282px;">Если не умещается</div><svg class="a" style="left:894.75px;top:144.30px" width="6.5" height="6" viewBox="0 0 6.5 6"><polygon points="0,0 6.5,0 3.25,6" fill="#000"/></svg><div class="a" style="left:893.5px;top:150.6px;width:8px;height:1px;background:#555"></div><div class="t" style="right:218px;top:157.12px;font-size:6.6px;color:#3a3a3a;font-weight:400;font-family:'Liberation Sans',sans-serif;letter-spacing:-0.282px;">На строке</div><div class="a" style="left:809.5px;top:154.6px;width:94.0px;height:10px;background:#fff;border:1px solid #a8a8a8;border-top-color:#8c8c8c"></div><div class="t" style="left:812.5px;top:157.12px;font-size:6.6px;color:#2a2a2a;font-weight:400;font-family:'Liberation Sans',sans-serif;letter-spacing:-0.282px;">Выравнивать вверх</div><svg class="a" style="left:894.75px;top:156.30px" width="6.5" height="6" viewBox="0 0 6.5 6"><polygon points="0,0 6.5,0 3.25,6" fill="#000"/></svg><div class="a" style="left:893.5px;top:162.6px;width:8px;height:1px;background:#555"></div><div class="a" style="left:756px;top:167px;width:150px;height:10px;background:linear-gradient(#dcdcdc,#d2d2d2)"></div><svg class="a" style="left:828px;top:169.5px" width="6" height="5" viewBox="0 0 6 5"><polygon points="0.6,0.6 5.4,0.6 3,4.4" fill="none" stroke="#303030" stroke-width="1"/></svg><div class="a" style="left:756px;top:177px;width:150px;height:1px;background:#cdcdcd"></div><div class="a" style="left:756px;top:178px;width:150px;height:1px;background:#fbfbfb"></div><svg class="a" style="left:759.00px;top:184.05px" width="6" height="5.5" viewBox="0 0 6 5.5"><polygon points="0,0 6,0 3.0,5.5" fill="#000"/></svg><div class="t" style="left:768px;top:184.12px;font-size:7.15px;color:#1a1a1a;font-weight:700;font-family:'Liberation Sans',sans-serif;letter-spacing:-0.305px;">На странице</div><div class="a" style="left:809.5px;top:193.5px;width:7.5px;height:7.5px;background:#fff;border:1px solid #8e8e8e"></div><div class="t" style="left:818px;top:194.53px;font-size:6.6px;color:#3a3a3a;font-weight:400;font-family:'Liberation Sans',sans-serif;letter-spacing:-0.282px;">Не отрывать от следующего</div><div class="a" style="left:809.5px;top:204.8px;width:7.5px;height:7.5px;background:#fff;border:1px solid #8e8e8e"></div><div class="t" style="left:818px;top:205.83px;font-size:6.6px;color:#3a3a3a;font-weight:400;font-family:'Liberation Sans',sans-serif;letter-spacing:-0.282px;">Не разрывать</div><div class="a" style="left:809.5px;top:215.8px;width:7.5px;height:7.5px;background:#fff;border:1px solid #8e8e8e"></div><div class="t" style="left:818px;top:216.83px;font-size:6.6px;color:#3a3a3a;font-weight:400;font-family:'Liberation Sans',sans-serif;letter-spacing:-0.282px;">С новой страницы</div><div class="a" style="left:809.5px;top:226.8px;width:7.5px;height:7.5px;background:#fff;border:1px solid #8e8e8e"></div><div class="t" style="left:818px;top:227.83px;font-size:6.6px;color:#3a3a3a;font-weight:400;font-family:'Liberation Sans',sans-serif;letter-spacing:-0.282px;">Выравнивать вниз</div><div class="a" style="left:756px;top:237px;width:150px;height:1px;background:#cdcdcd"></div><div class="a" style="left:756px;top:238px;width:150px;height:1px;background:#fbfbfb"></div><svg class="a" style="left:759.00px;top:241.85px" width="6" height="5.5" viewBox="0 0 6 5.5"><polygon points="0,0 6,0 3.0,5.5" fill="#000"/></svg><div class="t" style="left:768px;top:241.92px;font-size:7.15px;color:#1a1a1a;font-weight:700;font-family:'Liberation Sans',sans-serif;letter-spacing:-0.305px;">Рамка</div><svg class="a" style="left:760.5px;top:252.8px" width="7" height="7" viewBox="0 0 7 7"><rect x="0.5" y="0.5" width="6" height="6" fill="#ececec" stroke="#8a8a8a" stroke-width="0.9"/><path d="M1.8 3.5h3.4M3.5 1.8v3.4" stroke="#303030" stroke-width="0.9"/></svg><div class="t" style="right:218px;top:253.33px;font-size:6.6px;color:#3a3a3a;font-weight:400;font-family:'Liberation Sans',sans-serif;letter-spacing:-0.282px;">Слева</div><div class="a" style="left:809.5px;top:250.8px;width:94.0px;height:10px;background:#fff;border:1px solid #a8a8a8;border-top-color:#8c8c8c"></div><div class="t" style="left:812.5px;top:253.33px;font-size:6.6px;color:#2a2a2a;font-weight:400;font-family:'Liberation Sans',sans-serif;letter-spacing:-0.282px;">Отсутствует</div><svg class="a" style="left:760.5px;top:264.2px" width="7" height="7" viewBox="0 0 7 7"><rect x="0.5" y="0.5" width="6" height="6" fill="#ececec" stroke="#8a8a8a" stroke-width="0.9"/><path d="M1.8 3.5h3.4M3.5 1.8v3.4" stroke="#303030" stroke-width="0.9"/></svg><div class="t" style="right:218px;top:264.72px;font-size:6.6px;color:#3a3a3a;font-weight:400;font-family:'Liberation Sans',sans-serif;letter-spacing:-0.282px;">Сверху</div><div class="a" style="left:809.5px;top:262.2px;width:94.0px;height:10px;background:#fff;border:1px solid #a8a8a8;border-top-color:#8c8c8c"></div><div class="t" style="left:812.5px;top:264.72px;font-size:6.6px;color:#2a2a2a;font-weight:400;font-family:'Liberation Sans',sans-serif;letter-spacing:-0.282px;">Отсутствует</div><svg class="a" style="left:760.5px;top:275.6px" width="7" height="7" viewBox="0 0 7 7"><rect x="0.5" y="0.5" width="6" height="6" fill="#ececec" stroke="#8a8a8a" stroke-width="0.9"/><path d="M1.8 3.5h3.4M3.5 1.8v3.4" stroke="#303030" stroke-width="0.9"/></svg><div class="t" style="right:218px;top:276.12px;font-size:6.6px;color:#3a3a3a;font-weight:400;font-family:'Liberation Sans',sans-serif;letter-spacing:-0.282px;">Справа</div><div class="a" style="left:809.5px;top:273.6px;width:94.0px;height:10px;background:#fff;border:1px solid #a8a8a8;border-top-color:#8c8c8c"></div><div class="t" style="left:812.5px;top:276.12px;font-size:6.6px;color:#2a2a2a;font-weight:400;font-family:'Liberation Sans',sans-serif;letter-spacing:-0.282px;">Отсутствует</div><svg class="a" style="left:760.5px;top:287px" width="7" height="7" viewBox="0 0 7 7"><rect x="0.5" y="0.5" width="6" height="6" fill="#ececec" stroke="#8a8a8a" stroke-width="0.9"/><path d="M1.8 3.5h3.4M3.5 1.8v3.4" stroke="#303030" stroke-width="0.9"/></svg><div class="t" style="right:218px;top:287.52px;font-size:6.6px;color:#3a3a3a;font-weight:400;font-family:'Liberation Sans',sans-serif;letter-spacing:-0.282px;">Снизу</div><div class="a" style="left:809.5px;top:285.0px;width:94.0px;height:10px;background:#fff;border:1px solid #a8a8a8;border-top-color:#8c8c8c"></div><div class="t" style="left:812.5px;top:287.52px;font-size:6.6px;color:#2a2a2a;font-weight:400;font-family:'Liberation Sans',sans-serif;letter-spacing:-0.282px;">Отсутствует</div><div class="a" style="left:756px;top:298px;width:150px;height:1px;background:#cdcdcd"></div><div class="a" style="left:756px;top:299px;width:150px;height:1px;background:#fbfbfb"></div><svg class="a" style="left:759.00px;top:302.45px" width="6" height="5.5" viewBox="0 0 6 5.5"><polygon points="0,0 6,0 3.0,5.5" fill="#000"/></svg><div class="t" style="left:768px;top:302.52px;font-size:7.15px;color:#1a1a1a;font-weight:700;font-family:'Liberation Sans',sans-serif;letter-spacing:-0.305px;">Внешний вид</div><svg class="a" style="left:760.5px;top:313.4px" width="7" height="7" viewBox="0 0 7 7"><rect x="0.5" y="0.5" width="6" height="6" fill="#ececec" stroke="#8a8a8a" stroke-width="0.9"/><path d="M1.8 3.5h3.4M3.5 1.8v3.4" stroke="#303030" stroke-width="0.9"/></svg><div class="t" style="right:218px;top:313.92px;font-size:6.6px;color:#3a3a3a;font-weight:400;font-family:'Liberation Sans',sans-serif;letter-spacing:-0.282px;">Шрифт</div><div class="a" style="left:809.5px;top:311.4px;width:86.5px;height:10px;background:#fff;border:1px solid #a8a8a8;border-top-color:#8c8c8c"></div><div class="t" style="left:812.5px;top:313.92px;font-size:6.6px;color:#2a2a2a;font-weight:400;font-family:'Liberation Sans',sans-serif;letter-spacing:-0.282px;">Times New Roman, 11 пт</div><div class="a" style="left:898px;top:314.4px;width:4px;height:4px;background:#111"></div><div class="t" style="right:218px;top:325.72px;font-size:6.6px;color:#3a3a3a;font-weight:400;font-family:'Liberation Sans',sans-serif;letter-spacing:-0.282px;">Цвет фона</div><div class="a" style="left:809.5px;top:323px;width:17px;height:10.5px;background:#ececec;border:1px solid #b8b8b8"></div><div class="a" style="left:826px;top:323.2px;width:70px;height:10px;background:#fff;border:1px solid #a8a8a8;border-top-color:#8c8c8c"></div><div class="t" style="left:829px;top:325.72px;font-size:6.6px;color:#2a2a2a;font-weight:400;font-family:'Liberation Sans',sans-serif;letter-spacing:-0.282px;">Прозрачный</div><svg class="a" style="left:887.25px;top:324.90px" width="6.5" height="6" viewBox="0 0 6.5 6"><polygon points="0,0 6.5,0 3.25,6" fill="#000"/></svg><div class="a" style="left:886px;top:331.2px;width:8px;height:1px;background:#555"></div><div class="a" style="left:898px;top:326.2px;width:4.5px;height:4.5px;background:#fff;border:1px solid #8a8a8a"></div><div class="t" style="right:218px;top:337.52px;font-size:6.6px;color:#3a3a3a;font-weight:400;font-family:'Liberation Sans',sans-serif;letter-spacing:-0.282px;">Цвет текста</div><div class="a" style="left:809.5px;top:334.8px;width:17px;height:10.5px;background:#080808;border:1px solid #888"></div><div class="a" style="left:826px;top:335.0px;width:70px;height:10px;background:#fff;border:1px solid #a8a8a8;border-top-color:#8c8c8c"></div><div class="t" style="left:829px;top:337.52px;font-size:6.6px;color:#2a2a2a;font-weight:400;font-family:'Liberation Sans',sans-serif;letter-spacing:-0.282px;">Black</div><svg class="a" style="left:887.25px;top:336.70px" width="6.5" height="6" viewBox="0 0 6.5 6"><polygon points="0,0 6.5,0 3.25,6" fill="#000"/></svg><div class="a" style="left:886px;top:343.0px;width:8px;height:1px;background:#555"></div><div class="a" style="left:898px;top:338px;width:4.5px;height:4.5px;background:#fff;border:1px solid #8a8a8a"></div><div class="a" style="left:756px;top:347.5px;width:150px;height:10.5px;background:linear-gradient(#dcdcdc,#d2d2d2)"></div><svg class="a" style="left:828px;top:350.25px" width="6" height="5" viewBox="0 0 6 5"><polygon points="0.6,0.6 5.4,0.6 3,4.4" fill="none" stroke="#303030" stroke-width="1"/></svg><div class="a" style="left:756px;top:358px;width:150px;height:1px;background:#cdcdcd"></div><div class="a" style="left:756px;top:359px;width:150px;height:1px;background:#fbfbfb"></div><svg class="a" style="left:759.00px;top:364.25px" width="6" height="5.5" viewBox="0 0 6 5.5"><polygon points="0,0 6,0 3.0,5.5" fill="#000"/></svg><div class="t" style="left:768px;top:364.32px;font-size:7.15px;color:#1a1a1a;font-weight:700;font-family:'Liberation Sans',sans-serif;letter-spacing:-0.305px;">Текст</div><div class="t" style="right:218px;top:375.12px;font-size:6.6px;color:#3a3a3a;font-weight:400;font-family:'Liberation Sans',sans-serif;letter-spacing:-0.282px;">Перенос строк</div><div class="a" style="left:809.5px;top:374.1px;width:7.5px;height:7.5px;background:#fff;border:1px solid #8e8e8e"></div><svg class="a" style="left:810.5px;top:375.1px" width="6" height="6" viewBox="0 0 6 6"><path d="M0.8 3l1.6 1.8l3-4" fill="none" stroke="#1a1a1a" stroke-width="1.1"/></svg><div class="t" style="right:218px;top:386.12px;font-size:6.6px;color:#3a3a3a;font-weight:400;font-family:'Liberation Sans',sans-serif;letter-spacing:-0.282px;">№ страницы</div><div class="a" style="left:809.5px;top:385.1px;width:7.5px;height:7.5px;background:#fff;border:1px solid #8e8e8e"></div><div class="a" style="left:756px;top:395.5px;width:150px;height:10.5px;background:linear-gradient(#dcdcdc,#d2d2d2)"></div><svg class="a" style="left:828px;top:398.25px" width="6" height="5" viewBox="0 0 6 5"><polygon points="0.6,0.6 5.4,0.6 3,4.4" fill="none" stroke="#303030" stroke-width="1"/></svg><div class="a" style="left:756px;top:406px;width:150px;height:1px;background:#cdcdcd"></div><div class="a" style="left:756px;top:407px;width:150px;height:1px;background:#fbfbfb"></div><svg class="a" style="left:759.00px;top:412.05px" width="6" height="5.5" viewBox="0 0 6 5.5"><polygon points="0,0 6,0 3.0,5.5" fill="#000"/></svg><div class="t" style="left:768px;top:412.12px;font-size:7.15px;color:#1a1a1a;font-weight:700;font-family:'Liberation Sans',sans-serif;letter-spacing:-0.305px;">Колонка</div><div class="t" style="right:218px;top:423.72px;font-size:6.6px;color:#3a3a3a;font-weight:400;font-family:'Liberation Sans',sans-serif;letter-spacing:-0.282px;">Колонка</div><div class="a" style="left:809.5px;top:421.2px;width:94.0px;height:10px;background:#fff;border:1px solid #a8a8a8;border-top-color:#8c8c8c"></div><div class="t" style="left:812.5px;top:423.72px;font-size:6.6px;color:#2a2a2a;font-weight:400;font-family:'Liberation Sans',sans-serif;letter-spacing:-0.282px;">ФИО</div><svg class="a" style="left:894.75px;top:422.90px" width="6.5" height="6" viewBox="0 0 6.5 6"><polygon points="0,0 6.5,0 3.25,6" fill="#000"/></svg><div class="a" style="left:893.5px;top:429.2px;width:8px;height:1px;background:#555"></div><div class="t" style="right:218px;top:435.32px;font-size:6.6px;color:#3a3a3a;font-weight:400;font-family:'Liberation Sans',sans-serif;letter-spacing:-0.282px;">Формат</div><div class="a" style="left:809.5px;top:432.8px;width:94.0px;height:10px;background:#fff;border:1px solid #a8a8a8;border-top-color:#8c8c8c"></div><svg class="a" style="left:760.5px;top:446.2px" width="7" height="7" viewBox="0 0 7 7"><rect x="0.5" y="0.5" width="6" height="6" fill="#ececec" stroke="#8a8a8a" stroke-width="0.9"/><path d="M1.8 3.5h3.4M3.5 1.8v3.4" stroke="#303030" stroke-width="0.9"/></svg><div class="t" style="right:218px;top:446.72px;font-size:6.6px;color:#3a3a3a;font-weight:400;font-family:'Liberation Sans',sans-serif;letter-spacing:-0.282px;">Подстановка</div><div class="a" style="left:809.5px;top:444.2px;width:94.0px;height:10px;background:#fff;border:1px solid #a8a8a8;border-top-color:#8c8c8c"></div><div class="t" style="right:218px;top:458.32px;font-size:6.6px;color:#3a3a3a;font-weight:400;font-family:'Liberation Sans',sans-serif;letter-spacing:-0.282px;">При NULL</div><div class="a" style="left:809.5px;top:455.8px;width:94.0px;height:10px;background:#fff;border:1px solid #a8a8a8;border-top-color:#8c8c8c"></div><div class="a" style="left:756px;top:468px;width:150px;height:10px;background:linear-gradient(#dcdcdc,#d2d2d2)"></div><svg class="a" style="left:828px;top:470.5px" width="6" height="5" viewBox="0 0 6 5"><polygon points="0.6,0.6 5.4,0.6 3,4.4" fill="none" stroke="#303030" stroke-width="1"/></svg><div class="a" style="left:756px;top:478px;width:150px;height:10px;background:#c6c6c6;border-top:1px solid #b4b4b4"></div><div class="a" style="left:820px;top:490px;width:22px;height:1px;background:repeating-linear-gradient(90deg,#9a9a9a 0 1px,transparent 1px 2px)"></div><div class="a" style="left:755px;top:493px;width:151px;height:44px;background:#c3c3c3;border:1px solid #a8a8a8;border-top-color:#9a9a9a"></div></body></html>
